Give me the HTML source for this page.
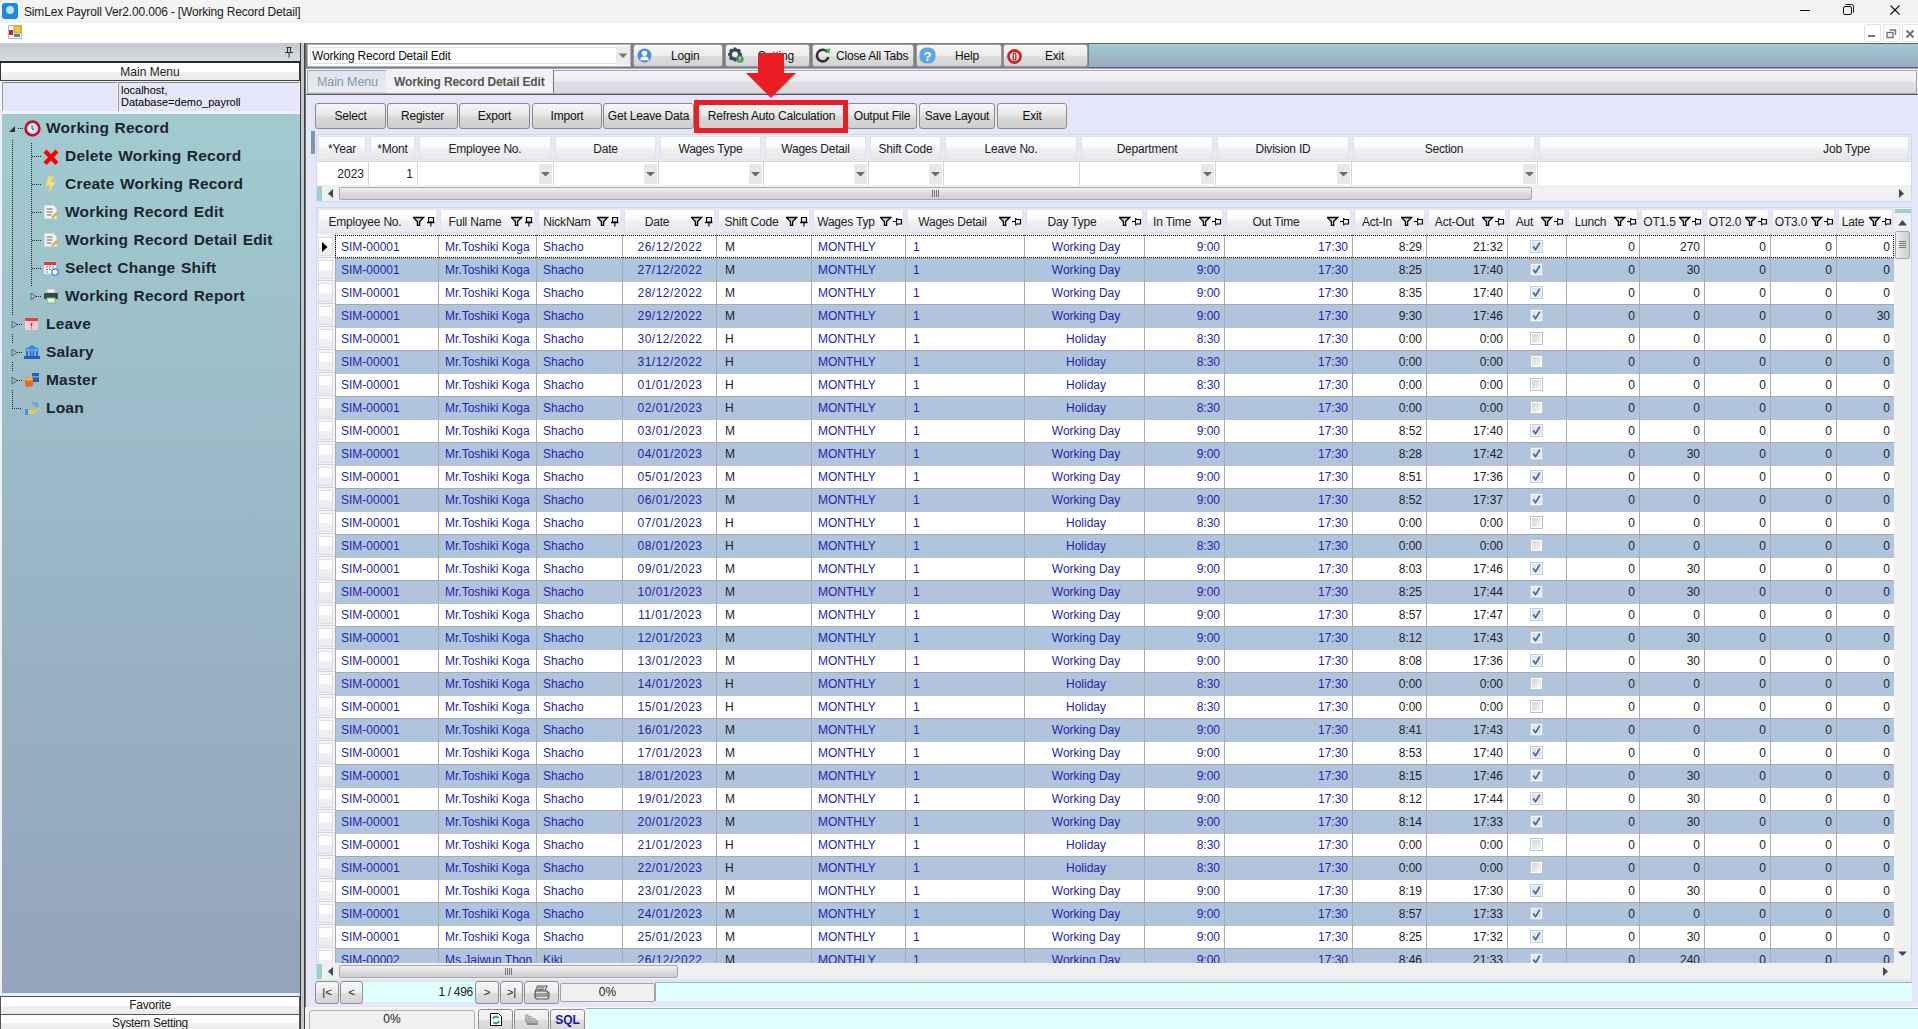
<!DOCTYPE html><html><head><meta charset="utf-8"><style>
*{box-sizing:border-box;margin:0;padding:0}
html,body{width:1918px;height:1029px;overflow:hidden;background:#f0f0f0;font-family:"Liberation Sans", sans-serif;font-size:12px;color:#000}
.ab{position:absolute}
.btn{position:absolute;border:1px solid #8a8a8a;border-radius:3px;background:linear-gradient(#f6f6f6 0%,#e8e8e8 45%,#d9d9d9 55%,#cfcfcf 100%);text-align:center;color:#111;letter-spacing:-0.2px;white-space:nowrap}
.tb{position:absolute;border:1px solid #9a9a9a;border-radius:3px;background:linear-gradient(#f7f7f7 0%,#ececec 50%,#dedede 51%,#d4d4d4 100%);color:#111;white-space:nowrap}
.hc{position:absolute;background:linear-gradient(#ffffff 0%,#fbfbfc 40%,#eeeef1 60%,#e9e9ee 100%);border:1px solid #e2e2ea;color:#333;white-space:nowrap;letter-spacing:-0.2px}
.t{position:absolute;white-space:nowrap}
</style></head><body>
<div class="ab" style="left:0;top:0;width:1918px;height:23px;background:#f3f3f3"></div>
<div class="ab" style="left:2px;top:3px;width:16px;height:16px;border-radius:3px;background:#1a8ae6"></div>
<div class="ab" style="left:6px;top:6px;width:8px;height:8px;border-radius:50%;background:#bfe3ff"></div>
<div class="t" style="left:24px;top:5px;font-size:12px;color:#1b1b1b;letter-spacing:-0.17px">SimLex Payroll Ver2.00.006 - [Working Record Detail]</div>
<svg class="ab" style="left:1790px;top:0" width="128" height="23"><path d="M10 10.5h10" stroke="#111" stroke-width="1"/><rect x="53.5" y="6.5" width="8" height="8" rx="1.5" fill="none" stroke="#111"/><path d="M55.5 4.5h6a2 2 0 0 1 2 2v6" fill="none" stroke="#111"/><path d="M100.5 5.5l9 9M109.5 5.5l-9 9" stroke="#111" stroke-width="1.1"/></svg>
<div class="ab" style="left:0;top:23px;width:1918px;height:20px;background:#fff"></div>
<svg class="ab" style="left:8px;top:25px" width="14" height="14"><rect x="0.5" y="0.5" width="13" height="13" fill="#fff" stroke="#bbb"/><rect x="6" y="1" width="7" height="7" fill="#f6c53a" stroke="#c9a020"/><rect x="1" y="5" width="4" height="5" fill="#c0282b"/><rect x="6" y="9" width="6" height="3" fill="#4a7fd0"/></svg>
<div class="ab" style="left:1864px;top:24px;width:17px;height:18px;border:1px solid #e4e4e4;border-radius:2px;background:#fff"></div>
<div class="ab" style="left:1883px;top:24px;width:17px;height:18px;border:1px solid #e4e4e4;border-radius:2px;background:#fff"></div>
<div class="ab" style="left:1902px;top:24px;width:17px;height:18px;border:1px solid #e4e4e4;border-radius:2px;background:#fff"></div>
<div class="ab" style="left:1868px;top:35px;width:7px;height:2px;background:#6a7683"></div>
<svg class="ab" style="left:1886px;top:28px" width="12" height="11"><rect x="1" y="4.5" width="6" height="5" fill="none" stroke="#6a7683" stroke-width="1.4"/><path d="M3.5 2h6v5" fill="none" stroke="#6a7683" stroke-width="1.4"/></svg>
<svg class="ab" style="left:1905px;top:29px" width="10" height="10"><path d="M1.5 1.5l7 7M8.5 1.5l-7 7" stroke="#6a7683" stroke-width="2"/></svg>
<div class="ab" style="left:0;top:43px;width:300px;height:18px;background:linear-gradient(#c3c8cf,#dadbdf)"></div>
<svg class="ab" style="left:284px;top:46px" width="10" height="12"><path d="M2.5 1.5h5M3.5 1.5v5M6.5 1.5v5M1 6.5h8M5 6.5v5" stroke="#333" stroke-width="1" fill="none"/></svg>
<div class="ab" style="left:0;top:61px;width:300px;height:2px;background:#1f2b38"></div>
<div class="ab" style="left:0;top:63px;width:300px;height:18px;background:linear-gradient(#fff 0%,#fff 55%,#efeff1 56%,#ececee 100%);border-left:1px solid #333;border-right:1px solid #333;border-bottom:1px solid #444"></div>
<div class="t" style="left:0;top:65px;width:300px;text-align:center;color:#222">Main Menu</div>
<div class="ab" style="left:0;top:82px;width:300px;height:32px;background:#f4f4f8"></div>
<div class="ab" style="left:2px;top:82px;width:115px;height:29px;background:#e6e6fa;border-left:1px solid #999;border-top:1px solid #888"></div>
<div class="ab" style="left:118px;top:82px;width:181px;height:29px;background:#e6e6fa;border-left:1px solid #999;border-top:1px solid #888"></div>
<div class="t" style="left:121px;top:84px;font-size:11px;line-height:12px;color:#000;letter-spacing:0px">localhost,<br>Database=demo_payroll</div>
<div class="ab" style="left:2px;top:114px;width:298px;height:879px;background:linear-gradient(#a1cbd0 0%,#9ab8c6 45%,#94a4bb 100%)"></div>
<div class="ab" style="left:0;top:114px;width:2px;height:879px;background:#eef0f3"></div>
<svg class="ab" style="left:9px;top:125px" width="8" height="8"><path d="M6 1v6H0z" fill="#333"/></svg>
<div class="ab" style="left:18px;top:128px;width:5px;height:1px;background:repeating-linear-gradient(90deg,#222 0 1px,transparent 1px 2px)"></div>
<div class="ab" style="left:24px;top:120px;width:16px;height:17px"><svg width="17" height="17"><circle cx="8.5" cy="8.5" r="6.8" fill="#f4f6fa" stroke="#c8102e" stroke-width="2.8"/><path d="M8.5 3.2a5.3 5.3 0 0 1 0 10.6z" fill="#c9dcf2"/><path d="M8 5v4.2h2" stroke="#3a4a6a" stroke-width="1" fill="none"/></svg></div>
<div class="t" style="left:46px;top:119px;font-size:15.5px;font-weight:bold;color:#1b2530;letter-spacing:0.2px;word-spacing:1px">Working Record</div>
<div class="ab" style="left:12px;top:140px;width:1px;height:176px;background:repeating-linear-gradient(#222 0 1px,transparent 1px 2px)"></div>
<div class="ab" style="left:12px;top:334px;width:1px;height:10px;background:repeating-linear-gradient(#222 0 1px,transparent 1px 2px)"></div>
<div class="ab" style="left:12px;top:362px;width:1px;height:10px;background:repeating-linear-gradient(#222 0 1px,transparent 1px 2px)"></div>
<div class="ab" style="left:12px;top:390px;width:1px;height:18px;background:repeating-linear-gradient(#222 0 1px,transparent 1px 2px)"></div>
<div class="ab" style="left:31px;top:143px;width:1px;height:144px;background:repeating-linear-gradient(#222 0 1px,transparent 1px 2px)"></div>
<div class="ab" style="left:32px;top:156px;width:10px;height:1px;background:repeating-linear-gradient(90deg,#222 0 1px,transparent 1px 2px)"></div>
<div class="ab" style="left:43px;top:148px;width:16px;height:17px"><svg width="16" height="17" style="margin:1px 0 0 0"><path d="M3.5 3.5l9 9.5M12.5 3.5l-9 9.5" stroke="#f00" stroke-width="4.2" stroke-linecap="square"/></svg></div>
<div class="t" style="left:65px;top:147px;font-size:15.5px;font-weight:bold;color:#1b2530;letter-spacing:0.2px;word-spacing:1px">Delete Working Record</div>
<div class="ab" style="left:32px;top:184px;width:10px;height:1px;background:repeating-linear-gradient(90deg,#222 0 1px,transparent 1px 2px)"></div>
<div class="ab" style="left:43px;top:176px;width:16px;height:17px"><svg width="14" height="18"><path d="M5 0.5h5.5l-2.5 5.5h4.5l-7.5 11.5 2-8H3z" fill="#f9dc6c"/></svg></div>
<div class="t" style="left:65px;top:175px;font-size:15.5px;font-weight:bold;color:#1b2530;letter-spacing:0.2px;word-spacing:1px">Create Working Record</div>
<div class="ab" style="left:32px;top:212px;width:10px;height:1px;background:repeating-linear-gradient(90deg,#222 0 1px,transparent 1px 2px)"></div>
<div class="ab" style="left:43px;top:204px;width:16px;height:17px"><svg width="16" height="16"><path d="M1.5 1.5h9l3 3v10h-12z" fill="#f4f4f4" stroke="#d8d8d8"/><path d="M3.5 5h6M3.5 8h6M3.5 11h5" stroke="#666" stroke-width="1"/><path d="M9 14l5-5" stroke="#e8a33a" stroke-width="2.4"/></svg></div>
<div class="t" style="left:65px;top:203px;font-size:15.5px;font-weight:bold;color:#1b2530;letter-spacing:0.2px;word-spacing:1px">Working Record Edit</div>
<div class="ab" style="left:32px;top:240px;width:10px;height:1px;background:repeating-linear-gradient(90deg,#222 0 1px,transparent 1px 2px)"></div>
<div class="ab" style="left:43px;top:232px;width:16px;height:17px"><svg width="16" height="16"><path d="M1.5 1.5h9l3 3v10h-12z" fill="#f4f4f4" stroke="#d8d8d8"/><path d="M3.5 5h6M3.5 8h6M3.5 11h5" stroke="#666" stroke-width="1"/><path d="M9 14l5-5" stroke="#e8a33a" stroke-width="2.4"/></svg></div>
<div class="t" style="left:65px;top:231px;font-size:15.5px;font-weight:bold;color:#1b2530;letter-spacing:0.2px;word-spacing:1px">Working Record Detail Edit</div>
<div class="ab" style="left:32px;top:268px;width:10px;height:1px;background:repeating-linear-gradient(90deg,#222 0 1px,transparent 1px 2px)"></div>
<div class="ab" style="left:43px;top:260px;width:16px;height:17px"><svg width="16" height="16"><rect x="1" y="2" width="12" height="12" fill="#fff" stroke="#ccc"/><rect x="1" y="2" width="12" height="3" fill="#e53935"/><path d="M3 7h2M6 7h2M9 7h2M3 9.5h2M6 9.5h2M3 12h2" stroke="#777"/><circle cx="12" cy="12" r="3.2" fill="#fff" stroke="#2a7de1" stroke-width="1.2"/></svg></div>
<div class="t" style="left:65px;top:259px;font-size:15.5px;font-weight:bold;color:#1b2530;letter-spacing:0.2px;word-spacing:1px">Select Change Shift</div>
<svg class="ab" style="left:30px;top:292px" width="7" height="9"><path d="M1 1l5 3.5L1 8z" fill="none" stroke="#666"/></svg>
<div class="ab" style="left:36px;top:296px;width:6px;height:1px;background:repeating-linear-gradient(90deg,#222 0 1px,transparent 1px 2px)"></div>
<div class="ab" style="left:43px;top:288px;width:16px;height:17px"><svg width="16" height="16"><rect x="4" y="1" width="8" height="4" fill="#eee" stroke="#bbb"/><rect x="1" y="5" width="14" height="6" rx="1" fill="#3d4450"/><rect x="4" y="10" width="8" height="5" fill="#e8f4e8" stroke="#6c6"/></svg></div>
<div class="t" style="left:65px;top:287px;font-size:15.5px;font-weight:bold;color:#1b2530;letter-spacing:0.2px;word-spacing:1px">Working Record Report</div>
<svg class="ab" style="left:11px;top:320px" width="7" height="9"><path d="M1 1l5 3.5L1 8z" fill="none" stroke="#666"/></svg>
<div class="ab" style="left:17px;top:324px;width:5px;height:1px;background:repeating-linear-gradient(90deg,#222 0 1px,transparent 1px 2px)"></div>
<div class="ab" style="left:24px;top:316px;width:16px;height:17px"><svg width="15" height="15"><rect x="1" y="2" width="13" height="12" fill="#f9c9cf"/><rect x="1" y="2" width="13" height="3" fill="#e53e3e"/><path d="M7.5 7v3.5M7.5 11.5v1" stroke="#d22" stroke-width="1.2"/></svg></div>
<div class="t" style="left:46px;top:315px;font-size:15.5px;font-weight:bold;color:#1b2530;letter-spacing:0.2px;word-spacing:1px">Leave</div>
<svg class="ab" style="left:11px;top:348px" width="7" height="9"><path d="M1 1l5 3.5L1 8z" fill="none" stroke="#666"/></svg>
<div class="ab" style="left:17px;top:352px;width:5px;height:1px;background:repeating-linear-gradient(90deg,#222 0 1px,transparent 1px 2px)"></div>
<div class="ab" style="left:24px;top:344px;width:16px;height:17px"><svg width="16" height="16"><path d="M8 1l7 4H1z" fill="#3a8ee6"/><rect x="1" y="5" width="14" height="2" fill="#5aa9f0"/><path d="M3 7v5M6.5 7v5M9.5 7v5M13 7v5" stroke="#2b6cd0" stroke-width="2"/><rect x="0" y="12" width="16" height="3" fill="#1f5cc4"/></svg></div>
<div class="t" style="left:46px;top:343px;font-size:15.5px;font-weight:bold;color:#1b2530;letter-spacing:0.2px;word-spacing:1px">Salary</div>
<svg class="ab" style="left:11px;top:376px" width="7" height="9"><path d="M1 1l5 3.5L1 8z" fill="none" stroke="#666"/></svg>
<div class="ab" style="left:17px;top:380px;width:5px;height:1px;background:repeating-linear-gradient(90deg,#222 0 1px,transparent 1px 2px)"></div>
<div class="ab" style="left:24px;top:372px;width:16px;height:17px"><svg width="16" height="16"><rect x="8" y="1" width="7" height="9" fill="#2a5fae"/><rect x="8" y="4" width="7" height="1.5" fill="#6fa0e0"/><path d="M1 7a4 1.8 0 0 1 8 0v6a4 1.8 0 0 1-8 0z" fill="#e86a20"/><ellipse cx="5" cy="7" rx="4" ry="1.8" fill="#f6b13b"/></svg></div>
<div class="t" style="left:46px;top:371px;font-size:15.5px;font-weight:bold;color:#1b2530;letter-spacing:0.2px;word-spacing:1px">Master</div>
<div class="ab" style="left:12px;top:408px;width:10px;height:1px;background:repeating-linear-gradient(90deg,#222 0 1px,transparent 1px 2px)"></div>
<div class="ab" style="left:24px;top:400px;width:16px;height:17px"><svg width="16" height="16"><path d="M1 9h3v6H1z" fill="#3a8ee6"/><path d="M4 10c3 0 5 0 6 1l5-3c1 1 0 2-1 3l-5 3H4z" fill="#f4c542"/><text x="8" y="7" font-size="7" fill="#2a7de1" font-family="Liberation Sans">%</text></svg></div>
<div class="t" style="left:46px;top:399px;font-size:15.5px;font-weight:bold;color:#1b2530;letter-spacing:0.2px;word-spacing:1px">Loan</div>
<div class="ab" style="left:0;top:993px;width:300px;height:36px;background:#e4eef2"></div>
<div class="ab" style="left:0;top:996px;width:300px;height:19px;background:linear-gradient(#fff 0%,#fff 55%,#f0f0f2 56%,#ececee 100%);border:1px solid #555"></div>
<div class="t" style="left:0;top:998px;width:300px;text-align:center;color:#222;letter-spacing:-0.2px">Favorite</div>
<div class="ab" style="left:0;top:1014px;width:300px;height:17px;background:linear-gradient(#fff 0%,#fff 55%,#f0f0f2 56%,#ececee 100%);border:1px solid #555"></div>
<div class="t" style="left:0;top:1016px;width:300px;text-align:center;color:#222;letter-spacing:-0.35px">System Setting</div>
<div class="ab" style="left:300px;top:43px;width:1px;height:986px;background:#3a3a3a"></div>
<div class="ab" style="left:301px;top:43px;width:3px;height:986px;background:#c8c8c8"></div>
<div class="ab" style="left:304px;top:43px;width:1px;height:986px;background:#404040"></div>
<div class="ab" style="left:305px;top:43px;width:1px;height:964px;background:#707070"></div>
<div class="ab" style="left:306px;top:43px;width:1612px;height:26px;background:linear-gradient(#a2ccd1,#95a8bf)"></div>
<div class="ab" style="left:306px;top:43px;width:1612px;height:1px;background:#55606a"></div>
<div class="ab" style="left:306px;top:67px;width:1612px;height:1px;background:#5c6670"></div>
<div class="ab" style="left:306px;top:43px;width:783px;height:25px;background:#7c8084"></div>
<div class="ab" style="left:307px;top:44px;width:324px;height:23px;background:#fff;border:1px solid #b0b0b0"></div>
<div class="ab" style="left:310px;top:47px;width:306px;height:17px;border:1px solid #e0e0e0;border-right:none"></div>
<div class="ab" style="left:616px;top:46px;width:14px;height:19px;background:#ececec"></div>
<svg class="ab" style="left:618px;top:53px" width="10" height="6"><path d="M0.5 0.5h9L5 5z" fill="#777"/></svg>
<div class="t" style="left:312px;top:49px;color:#111;letter-spacing:-0.2px">Working Record Detail Edit</div>
<div class="tb" style="left:633px;top:44px;width:90px;height:23px"></div>
<div class="ab" style="left:637px;top:48px"><svg width="15" height="15" style="display:block"><circle cx="7.5" cy="7.5" r="7" fill="#4a8ee0"/><circle cx="7.5" cy="5.3" r="2.6" fill="#fff"/><path d="M3.2 12.2a4.3 3.6 0 0 1 8.6 0z" fill="#fff"/></svg></div>
<div class="t" style="left:671px;top:49px;color:#111;letter-spacing:-0.2px">Login</div>
<div class="tb" style="left:725px;top:44px;width:85px;height:23px"></div>
<div class="ab" style="left:728px;top:47px"><svg width="16" height="16" style="display:block"><circle cx="7" cy="7.5" r="4.6" fill="none" stroke="#3b4a55" stroke-width="3.2"/><path d="M7 0.5v3M7 11.5v3M0 7.5h3M11 7.5h3M2 2.5l2 2M10 10.5l2 2M12 2.5l-2 2M2 12.5l2-2" stroke="#3b4a55" stroke-width="2.6"/><circle cx="12" cy="12.2" r="3.6" fill="#43a047"/><path d="M12 10v2.3M12 13.3v.9" stroke="#fff" stroke-width="1.2"/></svg></div>
<div class="t" style="left:758px;top:49px;color:#111;letter-spacing:-0.2px">Setting</div>
<div class="tb" style="left:812px;top:44px;width:102px;height:23px"></div>
<div class="ab" style="left:815px;top:48px"><svg width="16" height="15" style="display:block"><path d="M12.5 4.2A5.8 5.8 0 1 0 13.4 9" fill="none" stroke="#333" stroke-width="2.6"/><path d="M9.5 1.5l5.5-1-0.8 5.5z" fill="#2db24a"/></svg></div>
<div class="t" style="left:836px;top:49px;color:#111;letter-spacing:-0.2px">Close All Tabs</div>
<div class="tb" style="left:916px;top:44px;width:86px;height:23px"></div>
<div class="ab" style="left:919px;top:47px"><svg width="17" height="17" style="display:block"><rect x="0.5" y="0.5" width="16" height="16" rx="6.5" fill="#5aa6e8"/><text x="4.6" y="13.5" font-size="13" font-weight="bold" fill="#fff" font-family="Liberation Sans">?</text></svg></div>
<div class="t" style="left:955px;top:49px;color:#111;letter-spacing:-0.2px">Help</div>
<div class="tb" style="left:1003px;top:44px;width:85px;height:23px"></div>
<div class="ab" style="left:1007px;top:49px"><svg width="15" height="15" style="display:block"><circle cx="7.5" cy="7.5" r="6" fill="none" stroke="#c62828" stroke-width="2.8"/><rect x="6.2" y="4.2" width="2.6" height="6.4" rx="1.2" fill="none" stroke="#c62828" stroke-width="1.3"/></svg></div>
<div class="t" style="left:1045px;top:49px;color:#111;letter-spacing:-0.2px">Exit</div>
<div class="ab" style="left:306px;top:69px;width:1612px;height:26px;background:#f4f4f8"></div>
<div class="ab" style="left:307px;top:70px;width:1610px;height:24px;background:linear-gradient(#f4f4f6 0%,#ededf0 45%,#dfdfe3 52%,#dadade 100%);border:1px solid #a8a8ac"></div>
<div class="ab" style="left:308px;top:71px;width:78px;height:21px;background:linear-gradient(#dfe6ef,#e8ebf0);border-left:1px solid #e8e8ee"></div>
<div class="t" style="left:317px;top:75px;color:#8a96a6;letter-spacing:-0.1px;font-size:12.5px">Main Menu</div>
<div class="ab" style="left:386px;top:70px;width:168px;height:23px;background:#f2f2f4;border-right:1px solid #777"></div>
<div class="t" style="left:394px;top:75px;color:#555;font-weight:bold;letter-spacing:-0.15px">Working Record Detail Edit</div>
<div class="ab" style="left:306px;top:94px;width:1612px;height:1px;background:#5a5a5a"></div>
<div class="ab" style="left:306px;top:95px;width:1612px;height:934px;background:#e6e6fa"></div>
<div class="btn" style="left:315px;top:103px;width:71px;height:26px;line-height:24px">Select</div>
<div class="btn" style="left:387px;top:103px;width:71px;height:26px;line-height:24px">Register</div>
<div class="btn" style="left:459px;top:103px;width:71px;height:26px;line-height:24px">Export</div>
<div class="btn" style="left:532px;top:103px;width:70px;height:26px;line-height:24px">Import</div>
<div class="btn" style="left:603px;top:103px;width:91px;height:26px;line-height:24px">Get Leave Data</div>
<div class="btn" style="left:698px;top:103px;width:147px;height:26px;line-height:24px">Refresh Auto Calculation</div>
<div class="btn" style="left:847px;top:103px;width:70px;height:26px;line-height:24px">Output File</div>
<div class="btn" style="left:919px;top:103px;width:76px;height:26px;line-height:24px">Save Layout</div>
<div class="btn" style="left:997px;top:103px;width:70px;height:26px;line-height:24px">Exit</div>
<div class="ab" style="left:694px;top:100px;width:154px;height:33px;border:5px solid #ec1c24"></div>
<svg class="ab" style="left:745px;top:53px" width="52" height="46"><path d="M13 0h26v20h12L26 45 1 20h12z" fill="#ec1c24"/></svg>
<div class="ab" style="left:316px;top:134px;width:1596px;height:68px;background:#fff;border:1px solid #c8dde8"></div>
<div class="ab" style="left:311px;top:131px;width:4px;height:23px;background:#7d95b0"></div>
<div class="ab" style="left:317px;top:135px;width:1594px;height:26px;background:#e9e9f6"></div>
<div class="hc" style="left:318px;top:136px;width:48px;height:24px"></div>
<div class="t" style="left:316px;top:142px;width:52px;text-align:center;color:#222;letter-spacing:-0.2px">*Year</div>
<div class="hc" style="left:370px;top:136px;width:45px;height:24px"></div>
<div class="t" style="left:368px;top:142px;width:49px;text-align:center;color:#222;letter-spacing:-0.2px">*Mont</div>
<div class="ab" style="left:368px;top:161px;width:1px;height:24px;background:#d4d4d4"></div>
<div class="hc" style="left:419px;top:136px;width:132px;height:24px"></div>
<div class="t" style="left:417px;top:142px;width:136px;text-align:center;color:#222;letter-spacing:-0.2px">Employee No.</div>
<div class="ab" style="left:417px;top:161px;width:1px;height:24px;background:#d4d4d4"></div>
<div class="ab" style="left:539px;top:164px;width:13px;height:20px;background:#e8e8e8"></div>
<svg class="ab" style="left:541px;top:172px" width="9" height="5"><path d="M0 0h9L4.5 4.5z" fill="#6b6b6b"/></svg>
<div class="hc" style="left:555px;top:136px;width:101px;height:24px"></div>
<div class="t" style="left:553px;top:142px;width:105px;text-align:center;color:#222;letter-spacing:-0.2px">Date</div>
<div class="ab" style="left:553px;top:161px;width:1px;height:24px;background:#d4d4d4"></div>
<div class="ab" style="left:644px;top:164px;width:13px;height:20px;background:#e8e8e8"></div>
<svg class="ab" style="left:646px;top:172px" width="9" height="5"><path d="M0 0h9L4.5 4.5z" fill="#6b6b6b"/></svg>
<div class="hc" style="left:660px;top:136px;width:101px;height:24px"></div>
<div class="t" style="left:658px;top:142px;width:105px;text-align:center;color:#222;letter-spacing:-0.2px">Wages Type</div>
<div class="ab" style="left:658px;top:161px;width:1px;height:24px;background:#d4d4d4"></div>
<div class="ab" style="left:749px;top:164px;width:13px;height:20px;background:#e8e8e8"></div>
<svg class="ab" style="left:751px;top:172px" width="9" height="5"><path d="M0 0h9L4.5 4.5z" fill="#6b6b6b"/></svg>
<div class="hc" style="left:765px;top:136px;width:101px;height:24px"></div>
<div class="t" style="left:763px;top:142px;width:105px;text-align:center;color:#222;letter-spacing:-0.2px">Wages Detail</div>
<div class="ab" style="left:763px;top:161px;width:1px;height:24px;background:#d4d4d4"></div>
<div class="ab" style="left:854px;top:164px;width:13px;height:20px;background:#e8e8e8"></div>
<svg class="ab" style="left:856px;top:172px" width="9" height="5"><path d="M0 0h9L4.5 4.5z" fill="#6b6b6b"/></svg>
<div class="hc" style="left:870px;top:136px;width:71px;height:24px"></div>
<div class="t" style="left:868px;top:142px;width:75px;text-align:center;color:#222;letter-spacing:-0.2px">Shift Code</div>
<div class="ab" style="left:868px;top:161px;width:1px;height:24px;background:#d4d4d4"></div>
<div class="ab" style="left:929px;top:164px;width:13px;height:20px;background:#e8e8e8"></div>
<svg class="ab" style="left:931px;top:172px" width="9" height="5"><path d="M0 0h9L4.5 4.5z" fill="#6b6b6b"/></svg>
<div class="hc" style="left:945px;top:136px;width:132px;height:24px"></div>
<div class="t" style="left:943px;top:142px;width:136px;text-align:center;color:#222;letter-spacing:-0.2px">Leave No.</div>
<div class="ab" style="left:943px;top:161px;width:1px;height:24px;background:#d4d4d4"></div>
<div class="hc" style="left:1081px;top:136px;width:132px;height:24px"></div>
<div class="t" style="left:1079px;top:142px;width:136px;text-align:center;color:#222;letter-spacing:-0.2px">Department</div>
<div class="ab" style="left:1079px;top:161px;width:1px;height:24px;background:#d4d4d4"></div>
<div class="ab" style="left:1201px;top:164px;width:13px;height:20px;background:#e8e8e8"></div>
<svg class="ab" style="left:1203px;top:172px" width="9" height="5"><path d="M0 0h9L4.5 4.5z" fill="#6b6b6b"/></svg>
<div class="hc" style="left:1217px;top:136px;width:132px;height:24px"></div>
<div class="t" style="left:1215px;top:142px;width:136px;text-align:center;color:#222;letter-spacing:-0.2px">Division ID</div>
<div class="ab" style="left:1215px;top:161px;width:1px;height:24px;background:#d4d4d4"></div>
<div class="ab" style="left:1337px;top:164px;width:13px;height:20px;background:#e8e8e8"></div>
<svg class="ab" style="left:1339px;top:172px" width="9" height="5"><path d="M0 0h9L4.5 4.5z" fill="#6b6b6b"/></svg>
<div class="hc" style="left:1353px;top:136px;width:182px;height:24px"></div>
<div class="t" style="left:1351px;top:142px;width:186px;text-align:center;color:#222;letter-spacing:-0.2px">Section</div>
<div class="ab" style="left:1351px;top:161px;width:1px;height:24px;background:#d4d4d4"></div>
<div class="ab" style="left:1523px;top:164px;width:13px;height:20px;background:#e8e8e8"></div>
<svg class="ab" style="left:1525px;top:172px" width="9" height="5"><path d="M0 0h9L4.5 4.5z" fill="#6b6b6b"/></svg>
<div class="hc" style="left:1539px;top:136px;width:370px;height:24px"></div>
<div class="t" style="left:1537px;top:142px;width:333px;text-align:right;color:#222;letter-spacing:-0.2px">Job Type</div>
<div class="ab" style="left:1537px;top:161px;width:1px;height:24px;background:#d4d4d4"></div>
<div class="ab" style="left:317px;top:161px;width:1594px;height:1px;background:#d8d8e8"></div>
<div class="t" style="left:316px;top:167px;width:48px;text-align:right;color:#222">2023</div>
<div class="t" style="left:368px;top:167px;width:45px;text-align:right;color:#222">1</div>
<div class="ab" style="left:317px;top:185px;width:1594px;height:16px;background:#f0f0f0"></div>
<div class="ab" style="left:317px;top:186px;width:5px;height:15px;background:#9fcfd0"></div>
<svg class="ab" style="left:328px;top:189px" width="6" height="9"><path d="M5 0v9L0 4.5z" fill="#3e4862"/></svg>
<div class="ab" style="left:339px;top:187px;width:1193px;height:13px;border:1px solid #a8a8a8;border-radius:2px;background:linear-gradient(#f2f2f2,#dcdcdc 50%,#cfcfcf)"></div>
<svg class="ab" style="left:932px;top:190px" width="8" height="7"><path d="M0.5 0v7M2.5 0v7M4.5 0v7M6.5 0v7" stroke="#777"/></svg>
<svg class="ab" style="left:1899px;top:189px" width="6" height="9"><path d="M0 0v9L5 4.5z" fill="#3e4862"/></svg>
<div class="ab" style="left:316px;top:207px;width:1596px;height:773px;background:#f0f0f0;border:1px solid #c8dde8"></div>
<div class="ab" style="left:317px;top:208px;width:1577px;height:26px;background:#e6e6f6"></div>
<div class="hc" style="left:318px;top:209px;width:119px;height:24px"></div>
<div class="t" style="left:316px;top:215px;width:98px;text-align:center;color:#222;letter-spacing:-0.2px">Employee No.</div>
<div class="ab" style="left:413px;top:216px;width:24px;height:12px"><svg width="24" height="12"><path d="M0.3 1.5H10.7L6.6 5.6V9.3H4.4V5.6Z" fill="#d0d0d0" stroke="#000" stroke-width="1.3" stroke-linejoin="miter"/><path d="M15.5 1.5h5v4.5h-5z" fill="#e8e8e8" stroke="#000" stroke-width="1.2"/><path d="M14 6.6h7.5" stroke="#000" stroke-width="1.3"/><path d="M17.9 7v3.5" stroke="#000" stroke-width="1.1"/></svg></div>
<div class="hc" style="left:440px;top:209px;width:95px;height:24px"></div>
<div class="t" style="left:438px;top:215px;width:74px;text-align:center;color:#222;letter-spacing:-0.2px">Full Name</div>
<div class="ab" style="left:511px;top:216px;width:24px;height:12px"><svg width="24" height="12"><path d="M0.3 1.5H10.7L6.6 5.6V9.3H4.4V5.6Z" fill="#d0d0d0" stroke="#000" stroke-width="1.3" stroke-linejoin="miter"/><path d="M15.5 1.5h5v4.5h-5z" fill="#e8e8e8" stroke="#000" stroke-width="1.2"/><path d="M14 6.6h7.5" stroke="#000" stroke-width="1.3"/><path d="M17.9 7v3.5" stroke="#000" stroke-width="1.1"/></svg></div>
<div class="hc" style="left:538px;top:209px;width:83px;height:24px"></div>
<div class="t" style="left:536px;top:215px;width:62px;text-align:center;color:#222;letter-spacing:-0.2px">NickNam</div>
<div class="ab" style="left:597px;top:216px;width:24px;height:12px"><svg width="24" height="12"><path d="M0.3 1.5H10.7L6.6 5.6V9.3H4.4V5.6Z" fill="#d0d0d0" stroke="#000" stroke-width="1.3" stroke-linejoin="miter"/><path d="M15.5 1.5h5v4.5h-5z" fill="#e8e8e8" stroke="#000" stroke-width="1.2"/><path d="M14 6.6h7.5" stroke="#000" stroke-width="1.3"/><path d="M17.9 7v3.5" stroke="#000" stroke-width="1.1"/></svg></div>
<div class="hc" style="left:624px;top:209px;width:91px;height:24px"></div>
<div class="t" style="left:622px;top:215px;width:70px;text-align:center;color:#222;letter-spacing:-0.2px">Date</div>
<div class="ab" style="left:691px;top:216px;width:24px;height:12px"><svg width="24" height="12"><path d="M0.3 1.5H10.7L6.6 5.6V9.3H4.4V5.6Z" fill="#d0d0d0" stroke="#000" stroke-width="1.3" stroke-linejoin="miter"/><path d="M15.5 1.5h5v4.5h-5z" fill="#e8e8e8" stroke="#000" stroke-width="1.2"/><path d="M14 6.6h7.5" stroke="#000" stroke-width="1.3"/><path d="M17.9 7v3.5" stroke="#000" stroke-width="1.1"/></svg></div>
<div class="hc" style="left:718px;top:209px;width:92px;height:24px"></div>
<div class="t" style="left:716px;top:215px;width:71px;text-align:center;color:#222;letter-spacing:-0.2px">Shift Code</div>
<div class="ab" style="left:786px;top:216px;width:24px;height:12px"><svg width="24" height="12"><path d="M0.3 1.5H10.7L6.6 5.6V9.3H4.4V5.6Z" fill="#d0d0d0" stroke="#000" stroke-width="1.3" stroke-linejoin="miter"/><path d="M15.5 1.5h5v4.5h-5z" fill="#e8e8e8" stroke="#000" stroke-width="1.2"/><path d="M14 6.6h7.5" stroke="#000" stroke-width="1.3"/><path d="M17.9 7v3.5" stroke="#000" stroke-width="1.1"/></svg></div>
<div class="hc" style="left:813px;top:209px;width:91px;height:24px"></div>
<div class="t" style="left:811px;top:215px;width:70px;text-align:center;color:#222;letter-spacing:-0.2px">Wages Typ</div>
<div class="ab" style="left:880px;top:216px;width:24px;height:12px"><svg width="24" height="12"><path d="M0.3 1.5H10.7L6.6 5.6V9.3H4.4V5.6Z" fill="#d0d0d0" stroke="#000" stroke-width="1.3" stroke-linejoin="miter"/><path d="M13 5.5h3.5" stroke="#000" stroke-width="1.1"/><path d="M16.8 2v7.5" stroke="#000" stroke-width="1.3"/><path d="M17 3.5h4.5v4.5H17" fill="#f0f0f0" stroke="#000" stroke-width="1.2"/></svg></div>
<div class="hc" style="left:907px;top:209px;width:116px;height:24px"></div>
<div class="t" style="left:905px;top:215px;width:95px;text-align:center;color:#222;letter-spacing:-0.2px">Wages Detail</div>
<div class="ab" style="left:999px;top:216px;width:24px;height:12px"><svg width="24" height="12"><path d="M0.3 1.5H10.7L6.6 5.6V9.3H4.4V5.6Z" fill="#d0d0d0" stroke="#000" stroke-width="1.3" stroke-linejoin="miter"/><path d="M13 5.5h3.5" stroke="#000" stroke-width="1.1"/><path d="M16.8 2v7.5" stroke="#000" stroke-width="1.3"/><path d="M17 3.5h4.5v4.5H17" fill="#f0f0f0" stroke="#000" stroke-width="1.2"/></svg></div>
<div class="hc" style="left:1026px;top:209px;width:117px;height:24px"></div>
<div class="t" style="left:1024px;top:215px;width:96px;text-align:center;color:#222;letter-spacing:-0.2px">Day Type</div>
<div class="ab" style="left:1119px;top:216px;width:24px;height:12px"><svg width="24" height="12"><path d="M0.3 1.5H10.7L6.6 5.6V9.3H4.4V5.6Z" fill="#d0d0d0" stroke="#000" stroke-width="1.3" stroke-linejoin="miter"/><path d="M13 5.5h3.5" stroke="#000" stroke-width="1.1"/><path d="M16.8 2v7.5" stroke="#000" stroke-width="1.3"/><path d="M17 3.5h4.5v4.5H17" fill="#f0f0f0" stroke="#000" stroke-width="1.2"/></svg></div>
<div class="hc" style="left:1146px;top:209px;width:77px;height:24px"></div>
<div class="t" style="left:1144px;top:215px;width:56px;text-align:center;color:#222;letter-spacing:-0.2px">In Time</div>
<div class="ab" style="left:1199px;top:216px;width:24px;height:12px"><svg width="24" height="12"><path d="M0.3 1.5H10.7L6.6 5.6V9.3H4.4V5.6Z" fill="#d0d0d0" stroke="#000" stroke-width="1.3" stroke-linejoin="miter"/><path d="M13 5.5h3.5" stroke="#000" stroke-width="1.1"/><path d="M16.8 2v7.5" stroke="#000" stroke-width="1.3"/><path d="M17 3.5h4.5v4.5H17" fill="#f0f0f0" stroke="#000" stroke-width="1.2"/></svg></div>
<div class="hc" style="left:1226px;top:209px;width:125px;height:24px"></div>
<div class="t" style="left:1224px;top:215px;width:104px;text-align:center;color:#222;letter-spacing:-0.2px">Out Time</div>
<div class="ab" style="left:1327px;top:216px;width:24px;height:12px"><svg width="24" height="12"><path d="M0.3 1.5H10.7L6.6 5.6V9.3H4.4V5.6Z" fill="#d0d0d0" stroke="#000" stroke-width="1.3" stroke-linejoin="miter"/><path d="M13 5.5h3.5" stroke="#000" stroke-width="1.1"/><path d="M16.8 2v7.5" stroke="#000" stroke-width="1.3"/><path d="M17 3.5h4.5v4.5H17" fill="#f0f0f0" stroke="#000" stroke-width="1.2"/></svg></div>
<div class="hc" style="left:1354px;top:209px;width:71px;height:24px"></div>
<div class="t" style="left:1352px;top:215px;width:50px;text-align:center;color:#222;letter-spacing:-0.2px">Act-In</div>
<div class="ab" style="left:1401px;top:216px;width:24px;height:12px"><svg width="24" height="12"><path d="M0.3 1.5H10.7L6.6 5.6V9.3H4.4V5.6Z" fill="#d0d0d0" stroke="#000" stroke-width="1.3" stroke-linejoin="miter"/><path d="M13 5.5h3.5" stroke="#000" stroke-width="1.1"/><path d="M16.8 2v7.5" stroke="#000" stroke-width="1.3"/><path d="M17 3.5h4.5v4.5H17" fill="#f0f0f0" stroke="#000" stroke-width="1.2"/></svg></div>
<div class="hc" style="left:1428px;top:209px;width:78px;height:24px"></div>
<div class="t" style="left:1426px;top:215px;width:57px;text-align:center;color:#222;letter-spacing:-0.2px">Act-Out</div>
<div class="ab" style="left:1482px;top:216px;width:24px;height:12px"><svg width="24" height="12"><path d="M0.3 1.5H10.7L6.6 5.6V9.3H4.4V5.6Z" fill="#d0d0d0" stroke="#000" stroke-width="1.3" stroke-linejoin="miter"/><path d="M13 5.5h3.5" stroke="#000" stroke-width="1.1"/><path d="M16.8 2v7.5" stroke="#000" stroke-width="1.3"/><path d="M17 3.5h4.5v4.5H17" fill="#f0f0f0" stroke="#000" stroke-width="1.2"/></svg></div>
<div class="hc" style="left:1509px;top:209px;width:56px;height:24px"></div>
<div class="t" style="left:1507px;top:215px;width:35px;text-align:center;color:#222;letter-spacing:-0.2px">Aut</div>
<div class="ab" style="left:1541px;top:216px;width:24px;height:12px"><svg width="24" height="12"><path d="M0.3 1.5H10.7L6.6 5.6V9.3H4.4V5.6Z" fill="#d0d0d0" stroke="#000" stroke-width="1.3" stroke-linejoin="miter"/><path d="M13 5.5h3.5" stroke="#000" stroke-width="1.1"/><path d="M16.8 2v7.5" stroke="#000" stroke-width="1.3"/><path d="M17 3.5h4.5v4.5H17" fill="#f0f0f0" stroke="#000" stroke-width="1.2"/></svg></div>
<div class="hc" style="left:1568px;top:209px;width:70px;height:24px"></div>
<div class="t" style="left:1566px;top:215px;width:49px;text-align:center;color:#222;letter-spacing:-0.2px">Lunch</div>
<div class="ab" style="left:1614px;top:216px;width:24px;height:12px"><svg width="24" height="12"><path d="M0.3 1.5H10.7L6.6 5.6V9.3H4.4V5.6Z" fill="#d0d0d0" stroke="#000" stroke-width="1.3" stroke-linejoin="miter"/><path d="M13 5.5h3.5" stroke="#000" stroke-width="1.1"/><path d="M16.8 2v7.5" stroke="#000" stroke-width="1.3"/><path d="M17 3.5h4.5v4.5H17" fill="#f0f0f0" stroke="#000" stroke-width="1.2"/></svg></div>
<div class="hc" style="left:1641px;top:209px;width:62px;height:24px"></div>
<div class="t" style="left:1639px;top:215px;width:41px;text-align:center;color:#222;letter-spacing:-0.2px">OT1.5</div>
<div class="ab" style="left:1679px;top:216px;width:24px;height:12px"><svg width="24" height="12"><path d="M0.3 1.5H10.7L6.6 5.6V9.3H4.4V5.6Z" fill="#d0d0d0" stroke="#000" stroke-width="1.3" stroke-linejoin="miter"/><path d="M13 5.5h3.5" stroke="#000" stroke-width="1.1"/><path d="M16.8 2v7.5" stroke="#000" stroke-width="1.3"/><path d="M17 3.5h4.5v4.5H17" fill="#f0f0f0" stroke="#000" stroke-width="1.2"/></svg></div>
<div class="hc" style="left:1706px;top:209px;width:63px;height:24px"></div>
<div class="t" style="left:1704px;top:215px;width:42px;text-align:center;color:#222;letter-spacing:-0.2px">OT2.0</div>
<div class="ab" style="left:1745px;top:216px;width:24px;height:12px"><svg width="24" height="12"><path d="M0.3 1.5H10.7L6.6 5.6V9.3H4.4V5.6Z" fill="#d0d0d0" stroke="#000" stroke-width="1.3" stroke-linejoin="miter"/><path d="M13 5.5h3.5" stroke="#000" stroke-width="1.1"/><path d="M16.8 2v7.5" stroke="#000" stroke-width="1.3"/><path d="M17 3.5h4.5v4.5H17" fill="#f0f0f0" stroke="#000" stroke-width="1.2"/></svg></div>
<div class="hc" style="left:1772px;top:209px;width:63px;height:24px"></div>
<div class="t" style="left:1770px;top:215px;width:42px;text-align:center;color:#222;letter-spacing:-0.2px">OT3.0</div>
<div class="ab" style="left:1811px;top:216px;width:24px;height:12px"><svg width="24" height="12"><path d="M0.3 1.5H10.7L6.6 5.6V9.3H4.4V5.6Z" fill="#d0d0d0" stroke="#000" stroke-width="1.3" stroke-linejoin="miter"/><path d="M13 5.5h3.5" stroke="#000" stroke-width="1.1"/><path d="M16.8 2v7.5" stroke="#000" stroke-width="1.3"/><path d="M17 3.5h4.5v4.5H17" fill="#f0f0f0" stroke="#000" stroke-width="1.2"/></svg></div>
<div class="hc" style="left:1838px;top:209px;width:55px;height:24px"></div>
<div class="t" style="left:1836px;top:215px;width:34px;text-align:center;color:#222;letter-spacing:-0.2px">Late</div>
<div class="ab" style="left:1869px;top:216px;width:24px;height:12px"><svg width="24" height="12"><path d="M0.3 1.5H10.7L6.6 5.6V9.3H4.4V5.6Z" fill="#d0d0d0" stroke="#000" stroke-width="1.3" stroke-linejoin="miter"/><path d="M13 5.5h3.5" stroke="#000" stroke-width="1.1"/><path d="M16.8 2v7.5" stroke="#000" stroke-width="1.3"/><path d="M17 3.5h4.5v4.5H17" fill="#f0f0f0" stroke="#000" stroke-width="1.2"/></svg></div>
<div class="ab" style="left:317px;top:234px;width:1577px;height:729px;overflow:hidden">
<div class="ab" style="left:18px;top:1px;width:1559px;height:23px;background:#ffffff"></div>
<div class="ab" style="left:-1px;top:1px;width:19px;height:23px;background:#f2f2f8"></div>
<div class="ab" style="left:-1px;top:23px;width:19px;height:1px;background:#d4d4dc"></div>
<div class="ab" style="left:1px;top:3px;width:15px;height:19px;background:linear-gradient(#fff 0%,#fdfdfd 50%,#f1f1f3 51%,#ececef 100%);border:1px solid #dcdce4"></div>
<div class="ab" style="left:18px;top:24px;width:1559px;height:23px;background:#b0c4de"></div>
<div class="ab" style="left:-1px;top:24px;width:19px;height:23px;background:#f2f2f8"></div>
<div class="ab" style="left:-1px;top:46px;width:19px;height:1px;background:#d4d4dc"></div>
<div class="ab" style="left:1px;top:26px;width:15px;height:19px;background:linear-gradient(#fff 0%,#fdfdfd 50%,#f1f1f3 51%,#ececef 100%);border:1px solid #dcdce4"></div>
<div class="ab" style="left:18px;top:47px;width:1559px;height:23px;background:#ffffff"></div>
<div class="ab" style="left:-1px;top:47px;width:19px;height:23px;background:#f2f2f8"></div>
<div class="ab" style="left:-1px;top:69px;width:19px;height:1px;background:#d4d4dc"></div>
<div class="ab" style="left:1px;top:49px;width:15px;height:19px;background:linear-gradient(#fff 0%,#fdfdfd 50%,#f1f1f3 51%,#ececef 100%);border:1px solid #dcdce4"></div>
<div class="ab" style="left:18px;top:70px;width:1559px;height:23px;background:#b0c4de"></div>
<div class="ab" style="left:-1px;top:70px;width:19px;height:23px;background:#f2f2f8"></div>
<div class="ab" style="left:-1px;top:92px;width:19px;height:1px;background:#d4d4dc"></div>
<div class="ab" style="left:1px;top:72px;width:15px;height:19px;background:linear-gradient(#fff 0%,#fdfdfd 50%,#f1f1f3 51%,#ececef 100%);border:1px solid #dcdce4"></div>
<div class="ab" style="left:18px;top:93px;width:1559px;height:23px;background:#ffffff"></div>
<div class="ab" style="left:-1px;top:93px;width:19px;height:23px;background:#f2f2f8"></div>
<div class="ab" style="left:-1px;top:115px;width:19px;height:1px;background:#d4d4dc"></div>
<div class="ab" style="left:1px;top:95px;width:15px;height:19px;background:linear-gradient(#fff 0%,#fdfdfd 50%,#f1f1f3 51%,#ececef 100%);border:1px solid #dcdce4"></div>
<div class="ab" style="left:18px;top:116px;width:1559px;height:23px;background:#b0c4de"></div>
<div class="ab" style="left:-1px;top:116px;width:19px;height:23px;background:#f2f2f8"></div>
<div class="ab" style="left:-1px;top:138px;width:19px;height:1px;background:#d4d4dc"></div>
<div class="ab" style="left:1px;top:118px;width:15px;height:19px;background:linear-gradient(#fff 0%,#fdfdfd 50%,#f1f1f3 51%,#ececef 100%);border:1px solid #dcdce4"></div>
<div class="ab" style="left:18px;top:139px;width:1559px;height:23px;background:#ffffff"></div>
<div class="ab" style="left:-1px;top:139px;width:19px;height:23px;background:#f2f2f8"></div>
<div class="ab" style="left:-1px;top:161px;width:19px;height:1px;background:#d4d4dc"></div>
<div class="ab" style="left:1px;top:141px;width:15px;height:19px;background:linear-gradient(#fff 0%,#fdfdfd 50%,#f1f1f3 51%,#ececef 100%);border:1px solid #dcdce4"></div>
<div class="ab" style="left:18px;top:162px;width:1559px;height:23px;background:#b0c4de"></div>
<div class="ab" style="left:-1px;top:162px;width:19px;height:23px;background:#f2f2f8"></div>
<div class="ab" style="left:-1px;top:184px;width:19px;height:1px;background:#d4d4dc"></div>
<div class="ab" style="left:1px;top:164px;width:15px;height:19px;background:linear-gradient(#fff 0%,#fdfdfd 50%,#f1f1f3 51%,#ececef 100%);border:1px solid #dcdce4"></div>
<div class="ab" style="left:18px;top:185px;width:1559px;height:23px;background:#ffffff"></div>
<div class="ab" style="left:-1px;top:185px;width:19px;height:23px;background:#f2f2f8"></div>
<div class="ab" style="left:-1px;top:207px;width:19px;height:1px;background:#d4d4dc"></div>
<div class="ab" style="left:1px;top:187px;width:15px;height:19px;background:linear-gradient(#fff 0%,#fdfdfd 50%,#f1f1f3 51%,#ececef 100%);border:1px solid #dcdce4"></div>
<div class="ab" style="left:18px;top:208px;width:1559px;height:23px;background:#b0c4de"></div>
<div class="ab" style="left:-1px;top:208px;width:19px;height:23px;background:#f2f2f8"></div>
<div class="ab" style="left:-1px;top:230px;width:19px;height:1px;background:#d4d4dc"></div>
<div class="ab" style="left:1px;top:210px;width:15px;height:19px;background:linear-gradient(#fff 0%,#fdfdfd 50%,#f1f1f3 51%,#ececef 100%);border:1px solid #dcdce4"></div>
<div class="ab" style="left:18px;top:231px;width:1559px;height:23px;background:#ffffff"></div>
<div class="ab" style="left:-1px;top:231px;width:19px;height:23px;background:#f2f2f8"></div>
<div class="ab" style="left:-1px;top:253px;width:19px;height:1px;background:#d4d4dc"></div>
<div class="ab" style="left:1px;top:233px;width:15px;height:19px;background:linear-gradient(#fff 0%,#fdfdfd 50%,#f1f1f3 51%,#ececef 100%);border:1px solid #dcdce4"></div>
<div class="ab" style="left:18px;top:254px;width:1559px;height:23px;background:#b0c4de"></div>
<div class="ab" style="left:-1px;top:254px;width:19px;height:23px;background:#f2f2f8"></div>
<div class="ab" style="left:-1px;top:276px;width:19px;height:1px;background:#d4d4dc"></div>
<div class="ab" style="left:1px;top:256px;width:15px;height:19px;background:linear-gradient(#fff 0%,#fdfdfd 50%,#f1f1f3 51%,#ececef 100%);border:1px solid #dcdce4"></div>
<div class="ab" style="left:18px;top:277px;width:1559px;height:23px;background:#ffffff"></div>
<div class="ab" style="left:-1px;top:277px;width:19px;height:23px;background:#f2f2f8"></div>
<div class="ab" style="left:-1px;top:299px;width:19px;height:1px;background:#d4d4dc"></div>
<div class="ab" style="left:1px;top:279px;width:15px;height:19px;background:linear-gradient(#fff 0%,#fdfdfd 50%,#f1f1f3 51%,#ececef 100%);border:1px solid #dcdce4"></div>
<div class="ab" style="left:18px;top:300px;width:1559px;height:23px;background:#b0c4de"></div>
<div class="ab" style="left:-1px;top:300px;width:19px;height:23px;background:#f2f2f8"></div>
<div class="ab" style="left:-1px;top:322px;width:19px;height:1px;background:#d4d4dc"></div>
<div class="ab" style="left:1px;top:302px;width:15px;height:19px;background:linear-gradient(#fff 0%,#fdfdfd 50%,#f1f1f3 51%,#ececef 100%);border:1px solid #dcdce4"></div>
<div class="ab" style="left:18px;top:323px;width:1559px;height:23px;background:#ffffff"></div>
<div class="ab" style="left:-1px;top:323px;width:19px;height:23px;background:#f2f2f8"></div>
<div class="ab" style="left:-1px;top:345px;width:19px;height:1px;background:#d4d4dc"></div>
<div class="ab" style="left:1px;top:325px;width:15px;height:19px;background:linear-gradient(#fff 0%,#fdfdfd 50%,#f1f1f3 51%,#ececef 100%);border:1px solid #dcdce4"></div>
<div class="ab" style="left:18px;top:346px;width:1559px;height:23px;background:#b0c4de"></div>
<div class="ab" style="left:-1px;top:346px;width:19px;height:23px;background:#f2f2f8"></div>
<div class="ab" style="left:-1px;top:368px;width:19px;height:1px;background:#d4d4dc"></div>
<div class="ab" style="left:1px;top:348px;width:15px;height:19px;background:linear-gradient(#fff 0%,#fdfdfd 50%,#f1f1f3 51%,#ececef 100%);border:1px solid #dcdce4"></div>
<div class="ab" style="left:18px;top:369px;width:1559px;height:23px;background:#ffffff"></div>
<div class="ab" style="left:-1px;top:369px;width:19px;height:23px;background:#f2f2f8"></div>
<div class="ab" style="left:-1px;top:391px;width:19px;height:1px;background:#d4d4dc"></div>
<div class="ab" style="left:1px;top:371px;width:15px;height:19px;background:linear-gradient(#fff 0%,#fdfdfd 50%,#f1f1f3 51%,#ececef 100%);border:1px solid #dcdce4"></div>
<div class="ab" style="left:18px;top:392px;width:1559px;height:23px;background:#b0c4de"></div>
<div class="ab" style="left:-1px;top:392px;width:19px;height:23px;background:#f2f2f8"></div>
<div class="ab" style="left:-1px;top:414px;width:19px;height:1px;background:#d4d4dc"></div>
<div class="ab" style="left:1px;top:394px;width:15px;height:19px;background:linear-gradient(#fff 0%,#fdfdfd 50%,#f1f1f3 51%,#ececef 100%);border:1px solid #dcdce4"></div>
<div class="ab" style="left:18px;top:415px;width:1559px;height:23px;background:#ffffff"></div>
<div class="ab" style="left:-1px;top:415px;width:19px;height:23px;background:#f2f2f8"></div>
<div class="ab" style="left:-1px;top:437px;width:19px;height:1px;background:#d4d4dc"></div>
<div class="ab" style="left:1px;top:417px;width:15px;height:19px;background:linear-gradient(#fff 0%,#fdfdfd 50%,#f1f1f3 51%,#ececef 100%);border:1px solid #dcdce4"></div>
<div class="ab" style="left:18px;top:438px;width:1559px;height:23px;background:#b0c4de"></div>
<div class="ab" style="left:-1px;top:438px;width:19px;height:23px;background:#f2f2f8"></div>
<div class="ab" style="left:-1px;top:460px;width:19px;height:1px;background:#d4d4dc"></div>
<div class="ab" style="left:1px;top:440px;width:15px;height:19px;background:linear-gradient(#fff 0%,#fdfdfd 50%,#f1f1f3 51%,#ececef 100%);border:1px solid #dcdce4"></div>
<div class="ab" style="left:18px;top:461px;width:1559px;height:23px;background:#ffffff"></div>
<div class="ab" style="left:-1px;top:461px;width:19px;height:23px;background:#f2f2f8"></div>
<div class="ab" style="left:-1px;top:483px;width:19px;height:1px;background:#d4d4dc"></div>
<div class="ab" style="left:1px;top:463px;width:15px;height:19px;background:linear-gradient(#fff 0%,#fdfdfd 50%,#f1f1f3 51%,#ececef 100%);border:1px solid #dcdce4"></div>
<div class="ab" style="left:18px;top:484px;width:1559px;height:23px;background:#b0c4de"></div>
<div class="ab" style="left:-1px;top:484px;width:19px;height:23px;background:#f2f2f8"></div>
<div class="ab" style="left:-1px;top:506px;width:19px;height:1px;background:#d4d4dc"></div>
<div class="ab" style="left:1px;top:486px;width:15px;height:19px;background:linear-gradient(#fff 0%,#fdfdfd 50%,#f1f1f3 51%,#ececef 100%);border:1px solid #dcdce4"></div>
<div class="ab" style="left:18px;top:507px;width:1559px;height:23px;background:#ffffff"></div>
<div class="ab" style="left:-1px;top:507px;width:19px;height:23px;background:#f2f2f8"></div>
<div class="ab" style="left:-1px;top:529px;width:19px;height:1px;background:#d4d4dc"></div>
<div class="ab" style="left:1px;top:509px;width:15px;height:19px;background:linear-gradient(#fff 0%,#fdfdfd 50%,#f1f1f3 51%,#ececef 100%);border:1px solid #dcdce4"></div>
<div class="ab" style="left:18px;top:530px;width:1559px;height:23px;background:#b0c4de"></div>
<div class="ab" style="left:-1px;top:530px;width:19px;height:23px;background:#f2f2f8"></div>
<div class="ab" style="left:-1px;top:552px;width:19px;height:1px;background:#d4d4dc"></div>
<div class="ab" style="left:1px;top:532px;width:15px;height:19px;background:linear-gradient(#fff 0%,#fdfdfd 50%,#f1f1f3 51%,#ececef 100%);border:1px solid #dcdce4"></div>
<div class="ab" style="left:18px;top:553px;width:1559px;height:23px;background:#ffffff"></div>
<div class="ab" style="left:-1px;top:553px;width:19px;height:23px;background:#f2f2f8"></div>
<div class="ab" style="left:-1px;top:575px;width:19px;height:1px;background:#d4d4dc"></div>
<div class="ab" style="left:1px;top:555px;width:15px;height:19px;background:linear-gradient(#fff 0%,#fdfdfd 50%,#f1f1f3 51%,#ececef 100%);border:1px solid #dcdce4"></div>
<div class="ab" style="left:18px;top:576px;width:1559px;height:23px;background:#b0c4de"></div>
<div class="ab" style="left:-1px;top:576px;width:19px;height:23px;background:#f2f2f8"></div>
<div class="ab" style="left:-1px;top:598px;width:19px;height:1px;background:#d4d4dc"></div>
<div class="ab" style="left:1px;top:578px;width:15px;height:19px;background:linear-gradient(#fff 0%,#fdfdfd 50%,#f1f1f3 51%,#ececef 100%);border:1px solid #dcdce4"></div>
<div class="ab" style="left:18px;top:599px;width:1559px;height:23px;background:#ffffff"></div>
<div class="ab" style="left:-1px;top:599px;width:19px;height:23px;background:#f2f2f8"></div>
<div class="ab" style="left:-1px;top:621px;width:19px;height:1px;background:#d4d4dc"></div>
<div class="ab" style="left:1px;top:601px;width:15px;height:19px;background:linear-gradient(#fff 0%,#fdfdfd 50%,#f1f1f3 51%,#ececef 100%);border:1px solid #dcdce4"></div>
<div class="ab" style="left:18px;top:622px;width:1559px;height:23px;background:#b0c4de"></div>
<div class="ab" style="left:-1px;top:622px;width:19px;height:23px;background:#f2f2f8"></div>
<div class="ab" style="left:-1px;top:644px;width:19px;height:1px;background:#d4d4dc"></div>
<div class="ab" style="left:1px;top:624px;width:15px;height:19px;background:linear-gradient(#fff 0%,#fdfdfd 50%,#f1f1f3 51%,#ececef 100%);border:1px solid #dcdce4"></div>
<div class="ab" style="left:18px;top:645px;width:1559px;height:23px;background:#ffffff"></div>
<div class="ab" style="left:-1px;top:645px;width:19px;height:23px;background:#f2f2f8"></div>
<div class="ab" style="left:-1px;top:667px;width:19px;height:1px;background:#d4d4dc"></div>
<div class="ab" style="left:1px;top:647px;width:15px;height:19px;background:linear-gradient(#fff 0%,#fdfdfd 50%,#f1f1f3 51%,#ececef 100%);border:1px solid #dcdce4"></div>
<div class="ab" style="left:18px;top:668px;width:1559px;height:23px;background:#b0c4de"></div>
<div class="ab" style="left:-1px;top:668px;width:19px;height:23px;background:#f2f2f8"></div>
<div class="ab" style="left:-1px;top:690px;width:19px;height:1px;background:#d4d4dc"></div>
<div class="ab" style="left:1px;top:670px;width:15px;height:19px;background:linear-gradient(#fff 0%,#fdfdfd 50%,#f1f1f3 51%,#ececef 100%);border:1px solid #dcdce4"></div>
<div class="ab" style="left:18px;top:691px;width:1559px;height:23px;background:#ffffff"></div>
<div class="ab" style="left:-1px;top:691px;width:19px;height:23px;background:#f2f2f8"></div>
<div class="ab" style="left:-1px;top:713px;width:19px;height:1px;background:#d4d4dc"></div>
<div class="ab" style="left:1px;top:693px;width:15px;height:19px;background:linear-gradient(#fff 0%,#fdfdfd 50%,#f1f1f3 51%,#ececef 100%);border:1px solid #dcdce4"></div>
<div class="ab" style="left:18px;top:714px;width:1559px;height:23px;background:#b0c4de"></div>
<div class="ab" style="left:-1px;top:714px;width:19px;height:23px;background:#f2f2f8"></div>
<div class="ab" style="left:-1px;top:736px;width:19px;height:1px;background:#d4d4dc"></div>
<div class="ab" style="left:1px;top:716px;width:15px;height:19px;background:linear-gradient(#fff 0%,#fdfdfd 50%,#f1f1f3 51%,#ececef 100%);border:1px solid #dcdce4"></div>
<div class="ab" style="left:18px;top:24px;width:1559px;height:1px;background:#a4a8b0"></div>
<div class="ab" style="left:18px;top:47px;width:1559px;height:1px;background:#b9c1cc"></div>
<div class="ab" style="left:18px;top:70px;width:1559px;height:1px;background:#a4a8b0"></div>
<div class="ab" style="left:18px;top:93px;width:1559px;height:1px;background:#b9c1cc"></div>
<div class="ab" style="left:18px;top:116px;width:1559px;height:1px;background:#a4a8b0"></div>
<div class="ab" style="left:18px;top:139px;width:1559px;height:1px;background:#b9c1cc"></div>
<div class="ab" style="left:18px;top:162px;width:1559px;height:1px;background:#a4a8b0"></div>
<div class="ab" style="left:18px;top:185px;width:1559px;height:1px;background:#b9c1cc"></div>
<div class="ab" style="left:18px;top:208px;width:1559px;height:1px;background:#a4a8b0"></div>
<div class="ab" style="left:18px;top:231px;width:1559px;height:1px;background:#b9c1cc"></div>
<div class="ab" style="left:18px;top:254px;width:1559px;height:1px;background:#a4a8b0"></div>
<div class="ab" style="left:18px;top:277px;width:1559px;height:1px;background:#b9c1cc"></div>
<div class="ab" style="left:18px;top:300px;width:1559px;height:1px;background:#a4a8b0"></div>
<div class="ab" style="left:18px;top:323px;width:1559px;height:1px;background:#b9c1cc"></div>
<div class="ab" style="left:18px;top:346px;width:1559px;height:1px;background:#a4a8b0"></div>
<div class="ab" style="left:18px;top:369px;width:1559px;height:1px;background:#b9c1cc"></div>
<div class="ab" style="left:18px;top:392px;width:1559px;height:1px;background:#a4a8b0"></div>
<div class="ab" style="left:18px;top:415px;width:1559px;height:1px;background:#b9c1cc"></div>
<div class="ab" style="left:18px;top:438px;width:1559px;height:1px;background:#a4a8b0"></div>
<div class="ab" style="left:18px;top:461px;width:1559px;height:1px;background:#b9c1cc"></div>
<div class="ab" style="left:18px;top:484px;width:1559px;height:1px;background:#a4a8b0"></div>
<div class="ab" style="left:18px;top:507px;width:1559px;height:1px;background:#b9c1cc"></div>
<div class="ab" style="left:18px;top:530px;width:1559px;height:1px;background:#a4a8b0"></div>
<div class="ab" style="left:18px;top:553px;width:1559px;height:1px;background:#b9c1cc"></div>
<div class="ab" style="left:18px;top:576px;width:1559px;height:1px;background:#a4a8b0"></div>
<div class="ab" style="left:18px;top:599px;width:1559px;height:1px;background:#b9c1cc"></div>
<div class="ab" style="left:18px;top:622px;width:1559px;height:1px;background:#a4a8b0"></div>
<div class="ab" style="left:18px;top:645px;width:1559px;height:1px;background:#b9c1cc"></div>
<div class="ab" style="left:18px;top:668px;width:1559px;height:1px;background:#a4a8b0"></div>
<div class="ab" style="left:18px;top:691px;width:1559px;height:1px;background:#b9c1cc"></div>
<div class="ab" style="left:18px;top:714px;width:1559px;height:1px;background:#a4a8b0"></div>
<div class="ab" style="left:18px;top:737px;width:1559px;height:1px;background:#b9c1cc"></div>
<div class="ab" style="left:18px;top:0;width:1px;height:729px;background:#ababab"></div>
<div class="ab" style="left:121px;top:0;width:1px;height:729px;background:#ababab"></div>
<div class="ab" style="left:219px;top:0;width:1px;height:729px;background:#ababab"></div>
<div class="ab" style="left:305px;top:0;width:1px;height:729px;background:#ababab"></div>
<div class="ab" style="left:399px;top:0;width:1px;height:729px;background:#ababab"></div>
<div class="ab" style="left:494px;top:0;width:1px;height:729px;background:#ababab"></div>
<div class="ab" style="left:588px;top:0;width:1px;height:729px;background:#ababab"></div>
<div class="ab" style="left:707px;top:0;width:1px;height:729px;background:#ababab"></div>
<div class="ab" style="left:827px;top:0;width:1px;height:729px;background:#ababab"></div>
<div class="ab" style="left:907px;top:0;width:1px;height:729px;background:#ababab"></div>
<div class="ab" style="left:1035px;top:0;width:1px;height:729px;background:#ababab"></div>
<div class="ab" style="left:1109px;top:0;width:1px;height:729px;background:#ababab"></div>
<div class="ab" style="left:1190px;top:0;width:1px;height:729px;background:#ababab"></div>
<div class="ab" style="left:1249px;top:0;width:1px;height:729px;background:#ababab"></div>
<div class="ab" style="left:1322px;top:0;width:1px;height:729px;background:#ababab"></div>
<div class="ab" style="left:1387px;top:0;width:1px;height:729px;background:#ababab"></div>
<div class="ab" style="left:1453px;top:0;width:1px;height:729px;background:#ababab"></div>
<div class="ab" style="left:1519px;top:0;width:1px;height:729px;background:#ababab"></div>
<svg class="ab" style="left:5px;top:8px" width="6" height="10"><path d="M0 0l5.5 5L0 10z" fill="#000"/></svg>
<div class="t" style="left:24px;top:6px;color:#1f1fae">SIM-00001</div>
<div class="t" style="left:128px;top:6px;color:#1f1fae">Mr.Toshiki Koga</div>
<div class="t" style="left:226px;top:6px;color:#1f1fae">Shacho</div>
<div class="t" style="left:306px;top:6px;width:94px;text-align:center;color:#1f1fae;letter-spacing:0.5px;">26/12/2022</div>
<div class="t" style="left:408px;top:6px;color:#222">M</div>
<div class="t" style="left:501px;top:6px;color:#1f1fae">MONTHLY</div>
<div class="t" style="left:596px;top:6px;color:#1f1fae">1</div>
<div class="t" style="left:709px;top:6px;width:120px;text-align:center;color:#1f1fae;">Working Day</div>
<div class="t" style="left:827px;top:6px;width:76px;text-align:right;color:#1f1fae">9:00</div>
<div class="t" style="left:907px;top:6px;width:124px;text-align:right;color:#1f1fae">17:30</div>
<div class="t" style="left:1035px;top:6px;width:70px;text-align:right;color:#222">8:29</div>
<div class="t" style="left:1109px;top:6px;width:77px;text-align:right;color:#222">21:32</div>
<svg class="ab" style="left:1213px;top:6px" width="13" height="13"><rect x="0.5" y="0.5" width="12" height="12" fill="#eef2f8" stroke="#c4ccd8"/><rect x="1.5" y="1.5" width="10" height="10" fill="#dfe5ee" stroke="#f4f6fa"/><path d="M3.2 6.4l2.4 3.2 4.2-7" fill="none" stroke="#4a6494" stroke-width="1.7"/></svg>
<div class="t" style="left:1249px;top:6px;width:69px;text-align:right;color:#222">0</div>
<div class="t" style="left:1322px;top:6px;width:61px;text-align:right;color:#222">270</div>
<div class="t" style="left:1387px;top:6px;width:62px;text-align:right;color:#222">0</div>
<div class="t" style="left:1453px;top:6px;width:62px;text-align:right;color:#222">0</div>
<div class="t" style="left:1519px;top:6px;width:54px;text-align:right;color:#222">0</div>
<div class="t" style="left:24px;top:29px;color:#1f1fae">SIM-00001</div>
<div class="t" style="left:128px;top:29px;color:#1f1fae">Mr.Toshiki Koga</div>
<div class="t" style="left:226px;top:29px;color:#1f1fae">Shacho</div>
<div class="t" style="left:306px;top:29px;width:94px;text-align:center;color:#1f1fae;letter-spacing:0.5px;">27/12/2022</div>
<div class="t" style="left:408px;top:29px;color:#222">M</div>
<div class="t" style="left:501px;top:29px;color:#1f1fae">MONTHLY</div>
<div class="t" style="left:596px;top:29px;color:#1f1fae">1</div>
<div class="t" style="left:709px;top:29px;width:120px;text-align:center;color:#1f1fae;">Working Day</div>
<div class="t" style="left:827px;top:29px;width:76px;text-align:right;color:#1f1fae">9:00</div>
<div class="t" style="left:907px;top:29px;width:124px;text-align:right;color:#1f1fae">17:30</div>
<div class="t" style="left:1035px;top:29px;width:70px;text-align:right;color:#222">8:25</div>
<div class="t" style="left:1109px;top:29px;width:77px;text-align:right;color:#222">17:40</div>
<svg class="ab" style="left:1213px;top:29px" width="13" height="13"><rect x="0.5" y="0.5" width="12" height="12" fill="#eef2f8" stroke="#c4ccd8"/><rect x="1.5" y="1.5" width="10" height="10" fill="#dfe5ee" stroke="#f4f6fa"/><path d="M3.2 6.4l2.4 3.2 4.2-7" fill="none" stroke="#4a6494" stroke-width="1.7"/></svg>
<div class="t" style="left:1249px;top:29px;width:69px;text-align:right;color:#222">0</div>
<div class="t" style="left:1322px;top:29px;width:61px;text-align:right;color:#222">30</div>
<div class="t" style="left:1387px;top:29px;width:62px;text-align:right;color:#222">0</div>
<div class="t" style="left:1453px;top:29px;width:62px;text-align:right;color:#222">0</div>
<div class="t" style="left:1519px;top:29px;width:54px;text-align:right;color:#222">0</div>
<div class="t" style="left:24px;top:52px;color:#1f1fae">SIM-00001</div>
<div class="t" style="left:128px;top:52px;color:#1f1fae">Mr.Toshiki Koga</div>
<div class="t" style="left:226px;top:52px;color:#1f1fae">Shacho</div>
<div class="t" style="left:306px;top:52px;width:94px;text-align:center;color:#1f1fae;letter-spacing:0.5px;">28/12/2022</div>
<div class="t" style="left:408px;top:52px;color:#222">M</div>
<div class="t" style="left:501px;top:52px;color:#1f1fae">MONTHLY</div>
<div class="t" style="left:596px;top:52px;color:#1f1fae">1</div>
<div class="t" style="left:709px;top:52px;width:120px;text-align:center;color:#1f1fae;">Working Day</div>
<div class="t" style="left:827px;top:52px;width:76px;text-align:right;color:#1f1fae">9:00</div>
<div class="t" style="left:907px;top:52px;width:124px;text-align:right;color:#1f1fae">17:30</div>
<div class="t" style="left:1035px;top:52px;width:70px;text-align:right;color:#222">8:35</div>
<div class="t" style="left:1109px;top:52px;width:77px;text-align:right;color:#222">17:40</div>
<svg class="ab" style="left:1213px;top:52px" width="13" height="13"><rect x="0.5" y="0.5" width="12" height="12" fill="#eef2f8" stroke="#c4ccd8"/><rect x="1.5" y="1.5" width="10" height="10" fill="#dfe5ee" stroke="#f4f6fa"/><path d="M3.2 6.4l2.4 3.2 4.2-7" fill="none" stroke="#4a6494" stroke-width="1.7"/></svg>
<div class="t" style="left:1249px;top:52px;width:69px;text-align:right;color:#222">0</div>
<div class="t" style="left:1322px;top:52px;width:61px;text-align:right;color:#222">0</div>
<div class="t" style="left:1387px;top:52px;width:62px;text-align:right;color:#222">0</div>
<div class="t" style="left:1453px;top:52px;width:62px;text-align:right;color:#222">0</div>
<div class="t" style="left:1519px;top:52px;width:54px;text-align:right;color:#222">0</div>
<div class="t" style="left:24px;top:75px;color:#1f1fae">SIM-00001</div>
<div class="t" style="left:128px;top:75px;color:#1f1fae">Mr.Toshiki Koga</div>
<div class="t" style="left:226px;top:75px;color:#1f1fae">Shacho</div>
<div class="t" style="left:306px;top:75px;width:94px;text-align:center;color:#1f1fae;letter-spacing:0.5px;">29/12/2022</div>
<div class="t" style="left:408px;top:75px;color:#222">M</div>
<div class="t" style="left:501px;top:75px;color:#1f1fae">MONTHLY</div>
<div class="t" style="left:596px;top:75px;color:#1f1fae">1</div>
<div class="t" style="left:709px;top:75px;width:120px;text-align:center;color:#1f1fae;">Working Day</div>
<div class="t" style="left:827px;top:75px;width:76px;text-align:right;color:#1f1fae">9:00</div>
<div class="t" style="left:907px;top:75px;width:124px;text-align:right;color:#1f1fae">17:30</div>
<div class="t" style="left:1035px;top:75px;width:70px;text-align:right;color:#222">9:30</div>
<div class="t" style="left:1109px;top:75px;width:77px;text-align:right;color:#222">17:46</div>
<svg class="ab" style="left:1213px;top:75px" width="13" height="13"><rect x="0.5" y="0.5" width="12" height="12" fill="#eef2f8" stroke="#c4ccd8"/><rect x="1.5" y="1.5" width="10" height="10" fill="#dfe5ee" stroke="#f4f6fa"/><path d="M3.2 6.4l2.4 3.2 4.2-7" fill="none" stroke="#4a6494" stroke-width="1.7"/></svg>
<div class="t" style="left:1249px;top:75px;width:69px;text-align:right;color:#222">0</div>
<div class="t" style="left:1322px;top:75px;width:61px;text-align:right;color:#222">0</div>
<div class="t" style="left:1387px;top:75px;width:62px;text-align:right;color:#222">0</div>
<div class="t" style="left:1453px;top:75px;width:62px;text-align:right;color:#222">0</div>
<div class="t" style="left:1519px;top:75px;width:54px;text-align:right;color:#222">30</div>
<div class="t" style="left:24px;top:98px;color:#1f1fae">SIM-00001</div>
<div class="t" style="left:128px;top:98px;color:#1f1fae">Mr.Toshiki Koga</div>
<div class="t" style="left:226px;top:98px;color:#1f1fae">Shacho</div>
<div class="t" style="left:306px;top:98px;width:94px;text-align:center;color:#1f1fae;letter-spacing:0.5px;">30/12/2022</div>
<div class="t" style="left:408px;top:98px;color:#222">H</div>
<div class="t" style="left:501px;top:98px;color:#1f1fae">MONTHLY</div>
<div class="t" style="left:596px;top:98px;color:#1f1fae">1</div>
<div class="t" style="left:709px;top:98px;width:120px;text-align:center;color:#1f1fae;">Holiday</div>
<div class="t" style="left:827px;top:98px;width:76px;text-align:right;color:#1f1fae">8:30</div>
<div class="t" style="left:907px;top:98px;width:124px;text-align:right;color:#1f1fae">17:30</div>
<div class="t" style="left:1035px;top:98px;width:70px;text-align:right;color:#222">0:00</div>
<div class="t" style="left:1109px;top:98px;width:77px;text-align:right;color:#222">0:00</div>
<svg class="ab" style="left:1213px;top:98px" width="13" height="13"><defs><linearGradient id="cg4" x1="0" y1="0" x2="1" y2="1"><stop offset="0" stop-color="#d4d4d4"/><stop offset="1" stop-color="#f8f8f8"/></linearGradient></defs><rect x="0.5" y="0.5" width="12" height="12" fill="#fff" stroke="#bcc4d0"/><rect x="2" y="2" width="9" height="9" fill="url(#cg4)"/></svg>
<div class="t" style="left:1249px;top:98px;width:69px;text-align:right;color:#222">0</div>
<div class="t" style="left:1322px;top:98px;width:61px;text-align:right;color:#222">0</div>
<div class="t" style="left:1387px;top:98px;width:62px;text-align:right;color:#222">0</div>
<div class="t" style="left:1453px;top:98px;width:62px;text-align:right;color:#222">0</div>
<div class="t" style="left:1519px;top:98px;width:54px;text-align:right;color:#222">0</div>
<div class="t" style="left:24px;top:121px;color:#1f1fae">SIM-00001</div>
<div class="t" style="left:128px;top:121px;color:#1f1fae">Mr.Toshiki Koga</div>
<div class="t" style="left:226px;top:121px;color:#1f1fae">Shacho</div>
<div class="t" style="left:306px;top:121px;width:94px;text-align:center;color:#1f1fae;letter-spacing:0.5px;">31/12/2022</div>
<div class="t" style="left:408px;top:121px;color:#222">H</div>
<div class="t" style="left:501px;top:121px;color:#1f1fae">MONTHLY</div>
<div class="t" style="left:596px;top:121px;color:#1f1fae">1</div>
<div class="t" style="left:709px;top:121px;width:120px;text-align:center;color:#1f1fae;">Holiday</div>
<div class="t" style="left:827px;top:121px;width:76px;text-align:right;color:#1f1fae">8:30</div>
<div class="t" style="left:907px;top:121px;width:124px;text-align:right;color:#1f1fae">17:30</div>
<div class="t" style="left:1035px;top:121px;width:70px;text-align:right;color:#222">0:00</div>
<div class="t" style="left:1109px;top:121px;width:77px;text-align:right;color:#222">0:00</div>
<svg class="ab" style="left:1213px;top:121px" width="13" height="13"><defs><linearGradient id="cg5" x1="0" y1="0" x2="1" y2="1"><stop offset="0" stop-color="#d4d4d4"/><stop offset="1" stop-color="#f8f8f8"/></linearGradient></defs><rect x="0.5" y="0.5" width="12" height="12" fill="#fff" stroke="#bcc4d0"/><rect x="2" y="2" width="9" height="9" fill="url(#cg5)"/></svg>
<div class="t" style="left:1249px;top:121px;width:69px;text-align:right;color:#222">0</div>
<div class="t" style="left:1322px;top:121px;width:61px;text-align:right;color:#222">0</div>
<div class="t" style="left:1387px;top:121px;width:62px;text-align:right;color:#222">0</div>
<div class="t" style="left:1453px;top:121px;width:62px;text-align:right;color:#222">0</div>
<div class="t" style="left:1519px;top:121px;width:54px;text-align:right;color:#222">0</div>
<div class="t" style="left:24px;top:144px;color:#1f1fae">SIM-00001</div>
<div class="t" style="left:128px;top:144px;color:#1f1fae">Mr.Toshiki Koga</div>
<div class="t" style="left:226px;top:144px;color:#1f1fae">Shacho</div>
<div class="t" style="left:306px;top:144px;width:94px;text-align:center;color:#1f1fae;letter-spacing:0.5px;">01/01/2023</div>
<div class="t" style="left:408px;top:144px;color:#222">H</div>
<div class="t" style="left:501px;top:144px;color:#1f1fae">MONTHLY</div>
<div class="t" style="left:596px;top:144px;color:#1f1fae">1</div>
<div class="t" style="left:709px;top:144px;width:120px;text-align:center;color:#1f1fae;">Holiday</div>
<div class="t" style="left:827px;top:144px;width:76px;text-align:right;color:#1f1fae">8:30</div>
<div class="t" style="left:907px;top:144px;width:124px;text-align:right;color:#1f1fae">17:30</div>
<div class="t" style="left:1035px;top:144px;width:70px;text-align:right;color:#222">0:00</div>
<div class="t" style="left:1109px;top:144px;width:77px;text-align:right;color:#222">0:00</div>
<svg class="ab" style="left:1213px;top:144px" width="13" height="13"><defs><linearGradient id="cg6" x1="0" y1="0" x2="1" y2="1"><stop offset="0" stop-color="#d4d4d4"/><stop offset="1" stop-color="#f8f8f8"/></linearGradient></defs><rect x="0.5" y="0.5" width="12" height="12" fill="#fff" stroke="#bcc4d0"/><rect x="2" y="2" width="9" height="9" fill="url(#cg6)"/></svg>
<div class="t" style="left:1249px;top:144px;width:69px;text-align:right;color:#222">0</div>
<div class="t" style="left:1322px;top:144px;width:61px;text-align:right;color:#222">0</div>
<div class="t" style="left:1387px;top:144px;width:62px;text-align:right;color:#222">0</div>
<div class="t" style="left:1453px;top:144px;width:62px;text-align:right;color:#222">0</div>
<div class="t" style="left:1519px;top:144px;width:54px;text-align:right;color:#222">0</div>
<div class="t" style="left:24px;top:167px;color:#1f1fae">SIM-00001</div>
<div class="t" style="left:128px;top:167px;color:#1f1fae">Mr.Toshiki Koga</div>
<div class="t" style="left:226px;top:167px;color:#1f1fae">Shacho</div>
<div class="t" style="left:306px;top:167px;width:94px;text-align:center;color:#1f1fae;letter-spacing:0.5px;">02/01/2023</div>
<div class="t" style="left:408px;top:167px;color:#222">H</div>
<div class="t" style="left:501px;top:167px;color:#1f1fae">MONTHLY</div>
<div class="t" style="left:596px;top:167px;color:#1f1fae">1</div>
<div class="t" style="left:709px;top:167px;width:120px;text-align:center;color:#1f1fae;">Holiday</div>
<div class="t" style="left:827px;top:167px;width:76px;text-align:right;color:#1f1fae">8:30</div>
<div class="t" style="left:907px;top:167px;width:124px;text-align:right;color:#1f1fae">17:30</div>
<div class="t" style="left:1035px;top:167px;width:70px;text-align:right;color:#222">0:00</div>
<div class="t" style="left:1109px;top:167px;width:77px;text-align:right;color:#222">0:00</div>
<svg class="ab" style="left:1213px;top:167px" width="13" height="13"><defs><linearGradient id="cg7" x1="0" y1="0" x2="1" y2="1"><stop offset="0" stop-color="#d4d4d4"/><stop offset="1" stop-color="#f8f8f8"/></linearGradient></defs><rect x="0.5" y="0.5" width="12" height="12" fill="#fff" stroke="#bcc4d0"/><rect x="2" y="2" width="9" height="9" fill="url(#cg7)"/></svg>
<div class="t" style="left:1249px;top:167px;width:69px;text-align:right;color:#222">0</div>
<div class="t" style="left:1322px;top:167px;width:61px;text-align:right;color:#222">0</div>
<div class="t" style="left:1387px;top:167px;width:62px;text-align:right;color:#222">0</div>
<div class="t" style="left:1453px;top:167px;width:62px;text-align:right;color:#222">0</div>
<div class="t" style="left:1519px;top:167px;width:54px;text-align:right;color:#222">0</div>
<div class="t" style="left:24px;top:190px;color:#1f1fae">SIM-00001</div>
<div class="t" style="left:128px;top:190px;color:#1f1fae">Mr.Toshiki Koga</div>
<div class="t" style="left:226px;top:190px;color:#1f1fae">Shacho</div>
<div class="t" style="left:306px;top:190px;width:94px;text-align:center;color:#1f1fae;letter-spacing:0.5px;">03/01/2023</div>
<div class="t" style="left:408px;top:190px;color:#222">M</div>
<div class="t" style="left:501px;top:190px;color:#1f1fae">MONTHLY</div>
<div class="t" style="left:596px;top:190px;color:#1f1fae">1</div>
<div class="t" style="left:709px;top:190px;width:120px;text-align:center;color:#1f1fae;">Working Day</div>
<div class="t" style="left:827px;top:190px;width:76px;text-align:right;color:#1f1fae">9:00</div>
<div class="t" style="left:907px;top:190px;width:124px;text-align:right;color:#1f1fae">17:30</div>
<div class="t" style="left:1035px;top:190px;width:70px;text-align:right;color:#222">8:52</div>
<div class="t" style="left:1109px;top:190px;width:77px;text-align:right;color:#222">17:40</div>
<svg class="ab" style="left:1213px;top:190px" width="13" height="13"><rect x="0.5" y="0.5" width="12" height="12" fill="#eef2f8" stroke="#c4ccd8"/><rect x="1.5" y="1.5" width="10" height="10" fill="#dfe5ee" stroke="#f4f6fa"/><path d="M3.2 6.4l2.4 3.2 4.2-7" fill="none" stroke="#4a6494" stroke-width="1.7"/></svg>
<div class="t" style="left:1249px;top:190px;width:69px;text-align:right;color:#222">0</div>
<div class="t" style="left:1322px;top:190px;width:61px;text-align:right;color:#222">0</div>
<div class="t" style="left:1387px;top:190px;width:62px;text-align:right;color:#222">0</div>
<div class="t" style="left:1453px;top:190px;width:62px;text-align:right;color:#222">0</div>
<div class="t" style="left:1519px;top:190px;width:54px;text-align:right;color:#222">0</div>
<div class="t" style="left:24px;top:213px;color:#1f1fae">SIM-00001</div>
<div class="t" style="left:128px;top:213px;color:#1f1fae">Mr.Toshiki Koga</div>
<div class="t" style="left:226px;top:213px;color:#1f1fae">Shacho</div>
<div class="t" style="left:306px;top:213px;width:94px;text-align:center;color:#1f1fae;letter-spacing:0.5px;">04/01/2023</div>
<div class="t" style="left:408px;top:213px;color:#222">M</div>
<div class="t" style="left:501px;top:213px;color:#1f1fae">MONTHLY</div>
<div class="t" style="left:596px;top:213px;color:#1f1fae">1</div>
<div class="t" style="left:709px;top:213px;width:120px;text-align:center;color:#1f1fae;">Working Day</div>
<div class="t" style="left:827px;top:213px;width:76px;text-align:right;color:#1f1fae">9:00</div>
<div class="t" style="left:907px;top:213px;width:124px;text-align:right;color:#1f1fae">17:30</div>
<div class="t" style="left:1035px;top:213px;width:70px;text-align:right;color:#222">8:28</div>
<div class="t" style="left:1109px;top:213px;width:77px;text-align:right;color:#222">17:42</div>
<svg class="ab" style="left:1213px;top:213px" width="13" height="13"><rect x="0.5" y="0.5" width="12" height="12" fill="#eef2f8" stroke="#c4ccd8"/><rect x="1.5" y="1.5" width="10" height="10" fill="#dfe5ee" stroke="#f4f6fa"/><path d="M3.2 6.4l2.4 3.2 4.2-7" fill="none" stroke="#4a6494" stroke-width="1.7"/></svg>
<div class="t" style="left:1249px;top:213px;width:69px;text-align:right;color:#222">0</div>
<div class="t" style="left:1322px;top:213px;width:61px;text-align:right;color:#222">30</div>
<div class="t" style="left:1387px;top:213px;width:62px;text-align:right;color:#222">0</div>
<div class="t" style="left:1453px;top:213px;width:62px;text-align:right;color:#222">0</div>
<div class="t" style="left:1519px;top:213px;width:54px;text-align:right;color:#222">0</div>
<div class="t" style="left:24px;top:236px;color:#1f1fae">SIM-00001</div>
<div class="t" style="left:128px;top:236px;color:#1f1fae">Mr.Toshiki Koga</div>
<div class="t" style="left:226px;top:236px;color:#1f1fae">Shacho</div>
<div class="t" style="left:306px;top:236px;width:94px;text-align:center;color:#1f1fae;letter-spacing:0.5px;">05/01/2023</div>
<div class="t" style="left:408px;top:236px;color:#222">M</div>
<div class="t" style="left:501px;top:236px;color:#1f1fae">MONTHLY</div>
<div class="t" style="left:596px;top:236px;color:#1f1fae">1</div>
<div class="t" style="left:709px;top:236px;width:120px;text-align:center;color:#1f1fae;">Working Day</div>
<div class="t" style="left:827px;top:236px;width:76px;text-align:right;color:#1f1fae">9:00</div>
<div class="t" style="left:907px;top:236px;width:124px;text-align:right;color:#1f1fae">17:30</div>
<div class="t" style="left:1035px;top:236px;width:70px;text-align:right;color:#222">8:51</div>
<div class="t" style="left:1109px;top:236px;width:77px;text-align:right;color:#222">17:36</div>
<svg class="ab" style="left:1213px;top:236px" width="13" height="13"><rect x="0.5" y="0.5" width="12" height="12" fill="#eef2f8" stroke="#c4ccd8"/><rect x="1.5" y="1.5" width="10" height="10" fill="#dfe5ee" stroke="#f4f6fa"/><path d="M3.2 6.4l2.4 3.2 4.2-7" fill="none" stroke="#4a6494" stroke-width="1.7"/></svg>
<div class="t" style="left:1249px;top:236px;width:69px;text-align:right;color:#222">0</div>
<div class="t" style="left:1322px;top:236px;width:61px;text-align:right;color:#222">0</div>
<div class="t" style="left:1387px;top:236px;width:62px;text-align:right;color:#222">0</div>
<div class="t" style="left:1453px;top:236px;width:62px;text-align:right;color:#222">0</div>
<div class="t" style="left:1519px;top:236px;width:54px;text-align:right;color:#222">0</div>
<div class="t" style="left:24px;top:259px;color:#1f1fae">SIM-00001</div>
<div class="t" style="left:128px;top:259px;color:#1f1fae">Mr.Toshiki Koga</div>
<div class="t" style="left:226px;top:259px;color:#1f1fae">Shacho</div>
<div class="t" style="left:306px;top:259px;width:94px;text-align:center;color:#1f1fae;letter-spacing:0.5px;">06/01/2023</div>
<div class="t" style="left:408px;top:259px;color:#222">M</div>
<div class="t" style="left:501px;top:259px;color:#1f1fae">MONTHLY</div>
<div class="t" style="left:596px;top:259px;color:#1f1fae">1</div>
<div class="t" style="left:709px;top:259px;width:120px;text-align:center;color:#1f1fae;">Working Day</div>
<div class="t" style="left:827px;top:259px;width:76px;text-align:right;color:#1f1fae">9:00</div>
<div class="t" style="left:907px;top:259px;width:124px;text-align:right;color:#1f1fae">17:30</div>
<div class="t" style="left:1035px;top:259px;width:70px;text-align:right;color:#222">8:52</div>
<div class="t" style="left:1109px;top:259px;width:77px;text-align:right;color:#222">17:37</div>
<svg class="ab" style="left:1213px;top:259px" width="13" height="13"><rect x="0.5" y="0.5" width="12" height="12" fill="#eef2f8" stroke="#c4ccd8"/><rect x="1.5" y="1.5" width="10" height="10" fill="#dfe5ee" stroke="#f4f6fa"/><path d="M3.2 6.4l2.4 3.2 4.2-7" fill="none" stroke="#4a6494" stroke-width="1.7"/></svg>
<div class="t" style="left:1249px;top:259px;width:69px;text-align:right;color:#222">0</div>
<div class="t" style="left:1322px;top:259px;width:61px;text-align:right;color:#222">0</div>
<div class="t" style="left:1387px;top:259px;width:62px;text-align:right;color:#222">0</div>
<div class="t" style="left:1453px;top:259px;width:62px;text-align:right;color:#222">0</div>
<div class="t" style="left:1519px;top:259px;width:54px;text-align:right;color:#222">0</div>
<div class="t" style="left:24px;top:282px;color:#1f1fae">SIM-00001</div>
<div class="t" style="left:128px;top:282px;color:#1f1fae">Mr.Toshiki Koga</div>
<div class="t" style="left:226px;top:282px;color:#1f1fae">Shacho</div>
<div class="t" style="left:306px;top:282px;width:94px;text-align:center;color:#1f1fae;letter-spacing:0.5px;">07/01/2023</div>
<div class="t" style="left:408px;top:282px;color:#222">H</div>
<div class="t" style="left:501px;top:282px;color:#1f1fae">MONTHLY</div>
<div class="t" style="left:596px;top:282px;color:#1f1fae">1</div>
<div class="t" style="left:709px;top:282px;width:120px;text-align:center;color:#1f1fae;">Holiday</div>
<div class="t" style="left:827px;top:282px;width:76px;text-align:right;color:#1f1fae">8:30</div>
<div class="t" style="left:907px;top:282px;width:124px;text-align:right;color:#1f1fae">17:30</div>
<div class="t" style="left:1035px;top:282px;width:70px;text-align:right;color:#222">0:00</div>
<div class="t" style="left:1109px;top:282px;width:77px;text-align:right;color:#222">0:00</div>
<svg class="ab" style="left:1213px;top:282px" width="13" height="13"><defs><linearGradient id="cg12" x1="0" y1="0" x2="1" y2="1"><stop offset="0" stop-color="#d4d4d4"/><stop offset="1" stop-color="#f8f8f8"/></linearGradient></defs><rect x="0.5" y="0.5" width="12" height="12" fill="#fff" stroke="#bcc4d0"/><rect x="2" y="2" width="9" height="9" fill="url(#cg12)"/></svg>
<div class="t" style="left:1249px;top:282px;width:69px;text-align:right;color:#222">0</div>
<div class="t" style="left:1322px;top:282px;width:61px;text-align:right;color:#222">0</div>
<div class="t" style="left:1387px;top:282px;width:62px;text-align:right;color:#222">0</div>
<div class="t" style="left:1453px;top:282px;width:62px;text-align:right;color:#222">0</div>
<div class="t" style="left:1519px;top:282px;width:54px;text-align:right;color:#222">0</div>
<div class="t" style="left:24px;top:305px;color:#1f1fae">SIM-00001</div>
<div class="t" style="left:128px;top:305px;color:#1f1fae">Mr.Toshiki Koga</div>
<div class="t" style="left:226px;top:305px;color:#1f1fae">Shacho</div>
<div class="t" style="left:306px;top:305px;width:94px;text-align:center;color:#1f1fae;letter-spacing:0.5px;">08/01/2023</div>
<div class="t" style="left:408px;top:305px;color:#222">H</div>
<div class="t" style="left:501px;top:305px;color:#1f1fae">MONTHLY</div>
<div class="t" style="left:596px;top:305px;color:#1f1fae">1</div>
<div class="t" style="left:709px;top:305px;width:120px;text-align:center;color:#1f1fae;">Holiday</div>
<div class="t" style="left:827px;top:305px;width:76px;text-align:right;color:#1f1fae">8:30</div>
<div class="t" style="left:907px;top:305px;width:124px;text-align:right;color:#1f1fae">17:30</div>
<div class="t" style="left:1035px;top:305px;width:70px;text-align:right;color:#222">0:00</div>
<div class="t" style="left:1109px;top:305px;width:77px;text-align:right;color:#222">0:00</div>
<svg class="ab" style="left:1213px;top:305px" width="13" height="13"><defs><linearGradient id="cg13" x1="0" y1="0" x2="1" y2="1"><stop offset="0" stop-color="#d4d4d4"/><stop offset="1" stop-color="#f8f8f8"/></linearGradient></defs><rect x="0.5" y="0.5" width="12" height="12" fill="#fff" stroke="#bcc4d0"/><rect x="2" y="2" width="9" height="9" fill="url(#cg13)"/></svg>
<div class="t" style="left:1249px;top:305px;width:69px;text-align:right;color:#222">0</div>
<div class="t" style="left:1322px;top:305px;width:61px;text-align:right;color:#222">0</div>
<div class="t" style="left:1387px;top:305px;width:62px;text-align:right;color:#222">0</div>
<div class="t" style="left:1453px;top:305px;width:62px;text-align:right;color:#222">0</div>
<div class="t" style="left:1519px;top:305px;width:54px;text-align:right;color:#222">0</div>
<div class="t" style="left:24px;top:328px;color:#1f1fae">SIM-00001</div>
<div class="t" style="left:128px;top:328px;color:#1f1fae">Mr.Toshiki Koga</div>
<div class="t" style="left:226px;top:328px;color:#1f1fae">Shacho</div>
<div class="t" style="left:306px;top:328px;width:94px;text-align:center;color:#1f1fae;letter-spacing:0.5px;">09/01/2023</div>
<div class="t" style="left:408px;top:328px;color:#222">M</div>
<div class="t" style="left:501px;top:328px;color:#1f1fae">MONTHLY</div>
<div class="t" style="left:596px;top:328px;color:#1f1fae">1</div>
<div class="t" style="left:709px;top:328px;width:120px;text-align:center;color:#1f1fae;">Working Day</div>
<div class="t" style="left:827px;top:328px;width:76px;text-align:right;color:#1f1fae">9:00</div>
<div class="t" style="left:907px;top:328px;width:124px;text-align:right;color:#1f1fae">17:30</div>
<div class="t" style="left:1035px;top:328px;width:70px;text-align:right;color:#222">8:03</div>
<div class="t" style="left:1109px;top:328px;width:77px;text-align:right;color:#222">17:46</div>
<svg class="ab" style="left:1213px;top:328px" width="13" height="13"><rect x="0.5" y="0.5" width="12" height="12" fill="#eef2f8" stroke="#c4ccd8"/><rect x="1.5" y="1.5" width="10" height="10" fill="#dfe5ee" stroke="#f4f6fa"/><path d="M3.2 6.4l2.4 3.2 4.2-7" fill="none" stroke="#4a6494" stroke-width="1.7"/></svg>
<div class="t" style="left:1249px;top:328px;width:69px;text-align:right;color:#222">0</div>
<div class="t" style="left:1322px;top:328px;width:61px;text-align:right;color:#222">30</div>
<div class="t" style="left:1387px;top:328px;width:62px;text-align:right;color:#222">0</div>
<div class="t" style="left:1453px;top:328px;width:62px;text-align:right;color:#222">0</div>
<div class="t" style="left:1519px;top:328px;width:54px;text-align:right;color:#222">0</div>
<div class="t" style="left:24px;top:351px;color:#1f1fae">SIM-00001</div>
<div class="t" style="left:128px;top:351px;color:#1f1fae">Mr.Toshiki Koga</div>
<div class="t" style="left:226px;top:351px;color:#1f1fae">Shacho</div>
<div class="t" style="left:306px;top:351px;width:94px;text-align:center;color:#1f1fae;letter-spacing:0.5px;">10/01/2023</div>
<div class="t" style="left:408px;top:351px;color:#222">M</div>
<div class="t" style="left:501px;top:351px;color:#1f1fae">MONTHLY</div>
<div class="t" style="left:596px;top:351px;color:#1f1fae">1</div>
<div class="t" style="left:709px;top:351px;width:120px;text-align:center;color:#1f1fae;">Working Day</div>
<div class="t" style="left:827px;top:351px;width:76px;text-align:right;color:#1f1fae">9:00</div>
<div class="t" style="left:907px;top:351px;width:124px;text-align:right;color:#1f1fae">17:30</div>
<div class="t" style="left:1035px;top:351px;width:70px;text-align:right;color:#222">8:25</div>
<div class="t" style="left:1109px;top:351px;width:77px;text-align:right;color:#222">17:44</div>
<svg class="ab" style="left:1213px;top:351px" width="13" height="13"><rect x="0.5" y="0.5" width="12" height="12" fill="#eef2f8" stroke="#c4ccd8"/><rect x="1.5" y="1.5" width="10" height="10" fill="#dfe5ee" stroke="#f4f6fa"/><path d="M3.2 6.4l2.4 3.2 4.2-7" fill="none" stroke="#4a6494" stroke-width="1.7"/></svg>
<div class="t" style="left:1249px;top:351px;width:69px;text-align:right;color:#222">0</div>
<div class="t" style="left:1322px;top:351px;width:61px;text-align:right;color:#222">30</div>
<div class="t" style="left:1387px;top:351px;width:62px;text-align:right;color:#222">0</div>
<div class="t" style="left:1453px;top:351px;width:62px;text-align:right;color:#222">0</div>
<div class="t" style="left:1519px;top:351px;width:54px;text-align:right;color:#222">0</div>
<div class="t" style="left:24px;top:374px;color:#1f1fae">SIM-00001</div>
<div class="t" style="left:128px;top:374px;color:#1f1fae">Mr.Toshiki Koga</div>
<div class="t" style="left:226px;top:374px;color:#1f1fae">Shacho</div>
<div class="t" style="left:306px;top:374px;width:94px;text-align:center;color:#1f1fae;letter-spacing:0.5px;">11/01/2023</div>
<div class="t" style="left:408px;top:374px;color:#222">M</div>
<div class="t" style="left:501px;top:374px;color:#1f1fae">MONTHLY</div>
<div class="t" style="left:596px;top:374px;color:#1f1fae">1</div>
<div class="t" style="left:709px;top:374px;width:120px;text-align:center;color:#1f1fae;">Working Day</div>
<div class="t" style="left:827px;top:374px;width:76px;text-align:right;color:#1f1fae">9:00</div>
<div class="t" style="left:907px;top:374px;width:124px;text-align:right;color:#1f1fae">17:30</div>
<div class="t" style="left:1035px;top:374px;width:70px;text-align:right;color:#222">8:57</div>
<div class="t" style="left:1109px;top:374px;width:77px;text-align:right;color:#222">17:47</div>
<svg class="ab" style="left:1213px;top:374px" width="13" height="13"><rect x="0.5" y="0.5" width="12" height="12" fill="#eef2f8" stroke="#c4ccd8"/><rect x="1.5" y="1.5" width="10" height="10" fill="#dfe5ee" stroke="#f4f6fa"/><path d="M3.2 6.4l2.4 3.2 4.2-7" fill="none" stroke="#4a6494" stroke-width="1.7"/></svg>
<div class="t" style="left:1249px;top:374px;width:69px;text-align:right;color:#222">0</div>
<div class="t" style="left:1322px;top:374px;width:61px;text-align:right;color:#222">0</div>
<div class="t" style="left:1387px;top:374px;width:62px;text-align:right;color:#222">0</div>
<div class="t" style="left:1453px;top:374px;width:62px;text-align:right;color:#222">0</div>
<div class="t" style="left:1519px;top:374px;width:54px;text-align:right;color:#222">0</div>
<div class="t" style="left:24px;top:397px;color:#1f1fae">SIM-00001</div>
<div class="t" style="left:128px;top:397px;color:#1f1fae">Mr.Toshiki Koga</div>
<div class="t" style="left:226px;top:397px;color:#1f1fae">Shacho</div>
<div class="t" style="left:306px;top:397px;width:94px;text-align:center;color:#1f1fae;letter-spacing:0.5px;">12/01/2023</div>
<div class="t" style="left:408px;top:397px;color:#222">M</div>
<div class="t" style="left:501px;top:397px;color:#1f1fae">MONTHLY</div>
<div class="t" style="left:596px;top:397px;color:#1f1fae">1</div>
<div class="t" style="left:709px;top:397px;width:120px;text-align:center;color:#1f1fae;">Working Day</div>
<div class="t" style="left:827px;top:397px;width:76px;text-align:right;color:#1f1fae">9:00</div>
<div class="t" style="left:907px;top:397px;width:124px;text-align:right;color:#1f1fae">17:30</div>
<div class="t" style="left:1035px;top:397px;width:70px;text-align:right;color:#222">8:12</div>
<div class="t" style="left:1109px;top:397px;width:77px;text-align:right;color:#222">17:43</div>
<svg class="ab" style="left:1213px;top:397px" width="13" height="13"><rect x="0.5" y="0.5" width="12" height="12" fill="#eef2f8" stroke="#c4ccd8"/><rect x="1.5" y="1.5" width="10" height="10" fill="#dfe5ee" stroke="#f4f6fa"/><path d="M3.2 6.4l2.4 3.2 4.2-7" fill="none" stroke="#4a6494" stroke-width="1.7"/></svg>
<div class="t" style="left:1249px;top:397px;width:69px;text-align:right;color:#222">0</div>
<div class="t" style="left:1322px;top:397px;width:61px;text-align:right;color:#222">30</div>
<div class="t" style="left:1387px;top:397px;width:62px;text-align:right;color:#222">0</div>
<div class="t" style="left:1453px;top:397px;width:62px;text-align:right;color:#222">0</div>
<div class="t" style="left:1519px;top:397px;width:54px;text-align:right;color:#222">0</div>
<div class="t" style="left:24px;top:420px;color:#1f1fae">SIM-00001</div>
<div class="t" style="left:128px;top:420px;color:#1f1fae">Mr.Toshiki Koga</div>
<div class="t" style="left:226px;top:420px;color:#1f1fae">Shacho</div>
<div class="t" style="left:306px;top:420px;width:94px;text-align:center;color:#1f1fae;letter-spacing:0.5px;">13/01/2023</div>
<div class="t" style="left:408px;top:420px;color:#222">M</div>
<div class="t" style="left:501px;top:420px;color:#1f1fae">MONTHLY</div>
<div class="t" style="left:596px;top:420px;color:#1f1fae">1</div>
<div class="t" style="left:709px;top:420px;width:120px;text-align:center;color:#1f1fae;">Working Day</div>
<div class="t" style="left:827px;top:420px;width:76px;text-align:right;color:#1f1fae">9:00</div>
<div class="t" style="left:907px;top:420px;width:124px;text-align:right;color:#1f1fae">17:30</div>
<div class="t" style="left:1035px;top:420px;width:70px;text-align:right;color:#222">8:08</div>
<div class="t" style="left:1109px;top:420px;width:77px;text-align:right;color:#222">17:36</div>
<svg class="ab" style="left:1213px;top:420px" width="13" height="13"><rect x="0.5" y="0.5" width="12" height="12" fill="#eef2f8" stroke="#c4ccd8"/><rect x="1.5" y="1.5" width="10" height="10" fill="#dfe5ee" stroke="#f4f6fa"/><path d="M3.2 6.4l2.4 3.2 4.2-7" fill="none" stroke="#4a6494" stroke-width="1.7"/></svg>
<div class="t" style="left:1249px;top:420px;width:69px;text-align:right;color:#222">0</div>
<div class="t" style="left:1322px;top:420px;width:61px;text-align:right;color:#222">30</div>
<div class="t" style="left:1387px;top:420px;width:62px;text-align:right;color:#222">0</div>
<div class="t" style="left:1453px;top:420px;width:62px;text-align:right;color:#222">0</div>
<div class="t" style="left:1519px;top:420px;width:54px;text-align:right;color:#222">0</div>
<div class="t" style="left:24px;top:443px;color:#1f1fae">SIM-00001</div>
<div class="t" style="left:128px;top:443px;color:#1f1fae">Mr.Toshiki Koga</div>
<div class="t" style="left:226px;top:443px;color:#1f1fae">Shacho</div>
<div class="t" style="left:306px;top:443px;width:94px;text-align:center;color:#1f1fae;letter-spacing:0.5px;">14/01/2023</div>
<div class="t" style="left:408px;top:443px;color:#222">H</div>
<div class="t" style="left:501px;top:443px;color:#1f1fae">MONTHLY</div>
<div class="t" style="left:596px;top:443px;color:#1f1fae">1</div>
<div class="t" style="left:709px;top:443px;width:120px;text-align:center;color:#1f1fae;">Holiday</div>
<div class="t" style="left:827px;top:443px;width:76px;text-align:right;color:#1f1fae">8:30</div>
<div class="t" style="left:907px;top:443px;width:124px;text-align:right;color:#1f1fae">17:30</div>
<div class="t" style="left:1035px;top:443px;width:70px;text-align:right;color:#222">0:00</div>
<div class="t" style="left:1109px;top:443px;width:77px;text-align:right;color:#222">0:00</div>
<svg class="ab" style="left:1213px;top:443px" width="13" height="13"><defs><linearGradient id="cg19" x1="0" y1="0" x2="1" y2="1"><stop offset="0" stop-color="#d4d4d4"/><stop offset="1" stop-color="#f8f8f8"/></linearGradient></defs><rect x="0.5" y="0.5" width="12" height="12" fill="#fff" stroke="#bcc4d0"/><rect x="2" y="2" width="9" height="9" fill="url(#cg19)"/></svg>
<div class="t" style="left:1249px;top:443px;width:69px;text-align:right;color:#222">0</div>
<div class="t" style="left:1322px;top:443px;width:61px;text-align:right;color:#222">0</div>
<div class="t" style="left:1387px;top:443px;width:62px;text-align:right;color:#222">0</div>
<div class="t" style="left:1453px;top:443px;width:62px;text-align:right;color:#222">0</div>
<div class="t" style="left:1519px;top:443px;width:54px;text-align:right;color:#222">0</div>
<div class="t" style="left:24px;top:466px;color:#1f1fae">SIM-00001</div>
<div class="t" style="left:128px;top:466px;color:#1f1fae">Mr.Toshiki Koga</div>
<div class="t" style="left:226px;top:466px;color:#1f1fae">Shacho</div>
<div class="t" style="left:306px;top:466px;width:94px;text-align:center;color:#1f1fae;letter-spacing:0.5px;">15/01/2023</div>
<div class="t" style="left:408px;top:466px;color:#222">H</div>
<div class="t" style="left:501px;top:466px;color:#1f1fae">MONTHLY</div>
<div class="t" style="left:596px;top:466px;color:#1f1fae">1</div>
<div class="t" style="left:709px;top:466px;width:120px;text-align:center;color:#1f1fae;">Holiday</div>
<div class="t" style="left:827px;top:466px;width:76px;text-align:right;color:#1f1fae">8:30</div>
<div class="t" style="left:907px;top:466px;width:124px;text-align:right;color:#1f1fae">17:30</div>
<div class="t" style="left:1035px;top:466px;width:70px;text-align:right;color:#222">0:00</div>
<div class="t" style="left:1109px;top:466px;width:77px;text-align:right;color:#222">0:00</div>
<svg class="ab" style="left:1213px;top:466px" width="13" height="13"><defs><linearGradient id="cg20" x1="0" y1="0" x2="1" y2="1"><stop offset="0" stop-color="#d4d4d4"/><stop offset="1" stop-color="#f8f8f8"/></linearGradient></defs><rect x="0.5" y="0.5" width="12" height="12" fill="#fff" stroke="#bcc4d0"/><rect x="2" y="2" width="9" height="9" fill="url(#cg20)"/></svg>
<div class="t" style="left:1249px;top:466px;width:69px;text-align:right;color:#222">0</div>
<div class="t" style="left:1322px;top:466px;width:61px;text-align:right;color:#222">0</div>
<div class="t" style="left:1387px;top:466px;width:62px;text-align:right;color:#222">0</div>
<div class="t" style="left:1453px;top:466px;width:62px;text-align:right;color:#222">0</div>
<div class="t" style="left:1519px;top:466px;width:54px;text-align:right;color:#222">0</div>
<div class="t" style="left:24px;top:489px;color:#1f1fae">SIM-00001</div>
<div class="t" style="left:128px;top:489px;color:#1f1fae">Mr.Toshiki Koga</div>
<div class="t" style="left:226px;top:489px;color:#1f1fae">Shacho</div>
<div class="t" style="left:306px;top:489px;width:94px;text-align:center;color:#1f1fae;letter-spacing:0.5px;">16/01/2023</div>
<div class="t" style="left:408px;top:489px;color:#222">M</div>
<div class="t" style="left:501px;top:489px;color:#1f1fae">MONTHLY</div>
<div class="t" style="left:596px;top:489px;color:#1f1fae">1</div>
<div class="t" style="left:709px;top:489px;width:120px;text-align:center;color:#1f1fae;">Working Day</div>
<div class="t" style="left:827px;top:489px;width:76px;text-align:right;color:#1f1fae">9:00</div>
<div class="t" style="left:907px;top:489px;width:124px;text-align:right;color:#1f1fae">17:30</div>
<div class="t" style="left:1035px;top:489px;width:70px;text-align:right;color:#222">8:41</div>
<div class="t" style="left:1109px;top:489px;width:77px;text-align:right;color:#222">17:43</div>
<svg class="ab" style="left:1213px;top:489px" width="13" height="13"><rect x="0.5" y="0.5" width="12" height="12" fill="#eef2f8" stroke="#c4ccd8"/><rect x="1.5" y="1.5" width="10" height="10" fill="#dfe5ee" stroke="#f4f6fa"/><path d="M3.2 6.4l2.4 3.2 4.2-7" fill="none" stroke="#4a6494" stroke-width="1.7"/></svg>
<div class="t" style="left:1249px;top:489px;width:69px;text-align:right;color:#222">0</div>
<div class="t" style="left:1322px;top:489px;width:61px;text-align:right;color:#222">0</div>
<div class="t" style="left:1387px;top:489px;width:62px;text-align:right;color:#222">0</div>
<div class="t" style="left:1453px;top:489px;width:62px;text-align:right;color:#222">0</div>
<div class="t" style="left:1519px;top:489px;width:54px;text-align:right;color:#222">0</div>
<div class="t" style="left:24px;top:512px;color:#1f1fae">SIM-00001</div>
<div class="t" style="left:128px;top:512px;color:#1f1fae">Mr.Toshiki Koga</div>
<div class="t" style="left:226px;top:512px;color:#1f1fae">Shacho</div>
<div class="t" style="left:306px;top:512px;width:94px;text-align:center;color:#1f1fae;letter-spacing:0.5px;">17/01/2023</div>
<div class="t" style="left:408px;top:512px;color:#222">M</div>
<div class="t" style="left:501px;top:512px;color:#1f1fae">MONTHLY</div>
<div class="t" style="left:596px;top:512px;color:#1f1fae">1</div>
<div class="t" style="left:709px;top:512px;width:120px;text-align:center;color:#1f1fae;">Working Day</div>
<div class="t" style="left:827px;top:512px;width:76px;text-align:right;color:#1f1fae">9:00</div>
<div class="t" style="left:907px;top:512px;width:124px;text-align:right;color:#1f1fae">17:30</div>
<div class="t" style="left:1035px;top:512px;width:70px;text-align:right;color:#222">8:53</div>
<div class="t" style="left:1109px;top:512px;width:77px;text-align:right;color:#222">17:40</div>
<svg class="ab" style="left:1213px;top:512px" width="13" height="13"><rect x="0.5" y="0.5" width="12" height="12" fill="#eef2f8" stroke="#c4ccd8"/><rect x="1.5" y="1.5" width="10" height="10" fill="#dfe5ee" stroke="#f4f6fa"/><path d="M3.2 6.4l2.4 3.2 4.2-7" fill="none" stroke="#4a6494" stroke-width="1.7"/></svg>
<div class="t" style="left:1249px;top:512px;width:69px;text-align:right;color:#222">0</div>
<div class="t" style="left:1322px;top:512px;width:61px;text-align:right;color:#222">0</div>
<div class="t" style="left:1387px;top:512px;width:62px;text-align:right;color:#222">0</div>
<div class="t" style="left:1453px;top:512px;width:62px;text-align:right;color:#222">0</div>
<div class="t" style="left:1519px;top:512px;width:54px;text-align:right;color:#222">0</div>
<div class="t" style="left:24px;top:535px;color:#1f1fae">SIM-00001</div>
<div class="t" style="left:128px;top:535px;color:#1f1fae">Mr.Toshiki Koga</div>
<div class="t" style="left:226px;top:535px;color:#1f1fae">Shacho</div>
<div class="t" style="left:306px;top:535px;width:94px;text-align:center;color:#1f1fae;letter-spacing:0.5px;">18/01/2023</div>
<div class="t" style="left:408px;top:535px;color:#222">M</div>
<div class="t" style="left:501px;top:535px;color:#1f1fae">MONTHLY</div>
<div class="t" style="left:596px;top:535px;color:#1f1fae">1</div>
<div class="t" style="left:709px;top:535px;width:120px;text-align:center;color:#1f1fae;">Working Day</div>
<div class="t" style="left:827px;top:535px;width:76px;text-align:right;color:#1f1fae">9:00</div>
<div class="t" style="left:907px;top:535px;width:124px;text-align:right;color:#1f1fae">17:30</div>
<div class="t" style="left:1035px;top:535px;width:70px;text-align:right;color:#222">8:15</div>
<div class="t" style="left:1109px;top:535px;width:77px;text-align:right;color:#222">17:46</div>
<svg class="ab" style="left:1213px;top:535px" width="13" height="13"><rect x="0.5" y="0.5" width="12" height="12" fill="#eef2f8" stroke="#c4ccd8"/><rect x="1.5" y="1.5" width="10" height="10" fill="#dfe5ee" stroke="#f4f6fa"/><path d="M3.2 6.4l2.4 3.2 4.2-7" fill="none" stroke="#4a6494" stroke-width="1.7"/></svg>
<div class="t" style="left:1249px;top:535px;width:69px;text-align:right;color:#222">0</div>
<div class="t" style="left:1322px;top:535px;width:61px;text-align:right;color:#222">30</div>
<div class="t" style="left:1387px;top:535px;width:62px;text-align:right;color:#222">0</div>
<div class="t" style="left:1453px;top:535px;width:62px;text-align:right;color:#222">0</div>
<div class="t" style="left:1519px;top:535px;width:54px;text-align:right;color:#222">0</div>
<div class="t" style="left:24px;top:558px;color:#1f1fae">SIM-00001</div>
<div class="t" style="left:128px;top:558px;color:#1f1fae">Mr.Toshiki Koga</div>
<div class="t" style="left:226px;top:558px;color:#1f1fae">Shacho</div>
<div class="t" style="left:306px;top:558px;width:94px;text-align:center;color:#1f1fae;letter-spacing:0.5px;">19/01/2023</div>
<div class="t" style="left:408px;top:558px;color:#222">M</div>
<div class="t" style="left:501px;top:558px;color:#1f1fae">MONTHLY</div>
<div class="t" style="left:596px;top:558px;color:#1f1fae">1</div>
<div class="t" style="left:709px;top:558px;width:120px;text-align:center;color:#1f1fae;">Working Day</div>
<div class="t" style="left:827px;top:558px;width:76px;text-align:right;color:#1f1fae">9:00</div>
<div class="t" style="left:907px;top:558px;width:124px;text-align:right;color:#1f1fae">17:30</div>
<div class="t" style="left:1035px;top:558px;width:70px;text-align:right;color:#222">8:12</div>
<div class="t" style="left:1109px;top:558px;width:77px;text-align:right;color:#222">17:44</div>
<svg class="ab" style="left:1213px;top:558px" width="13" height="13"><rect x="0.5" y="0.5" width="12" height="12" fill="#eef2f8" stroke="#c4ccd8"/><rect x="1.5" y="1.5" width="10" height="10" fill="#dfe5ee" stroke="#f4f6fa"/><path d="M3.2 6.4l2.4 3.2 4.2-7" fill="none" stroke="#4a6494" stroke-width="1.7"/></svg>
<div class="t" style="left:1249px;top:558px;width:69px;text-align:right;color:#222">0</div>
<div class="t" style="left:1322px;top:558px;width:61px;text-align:right;color:#222">30</div>
<div class="t" style="left:1387px;top:558px;width:62px;text-align:right;color:#222">0</div>
<div class="t" style="left:1453px;top:558px;width:62px;text-align:right;color:#222">0</div>
<div class="t" style="left:1519px;top:558px;width:54px;text-align:right;color:#222">0</div>
<div class="t" style="left:24px;top:581px;color:#1f1fae">SIM-00001</div>
<div class="t" style="left:128px;top:581px;color:#1f1fae">Mr.Toshiki Koga</div>
<div class="t" style="left:226px;top:581px;color:#1f1fae">Shacho</div>
<div class="t" style="left:306px;top:581px;width:94px;text-align:center;color:#1f1fae;letter-spacing:0.5px;">20/01/2023</div>
<div class="t" style="left:408px;top:581px;color:#222">M</div>
<div class="t" style="left:501px;top:581px;color:#1f1fae">MONTHLY</div>
<div class="t" style="left:596px;top:581px;color:#1f1fae">1</div>
<div class="t" style="left:709px;top:581px;width:120px;text-align:center;color:#1f1fae;">Working Day</div>
<div class="t" style="left:827px;top:581px;width:76px;text-align:right;color:#1f1fae">9:00</div>
<div class="t" style="left:907px;top:581px;width:124px;text-align:right;color:#1f1fae">17:30</div>
<div class="t" style="left:1035px;top:581px;width:70px;text-align:right;color:#222">8:14</div>
<div class="t" style="left:1109px;top:581px;width:77px;text-align:right;color:#222">17:33</div>
<svg class="ab" style="left:1213px;top:581px" width="13" height="13"><rect x="0.5" y="0.5" width="12" height="12" fill="#eef2f8" stroke="#c4ccd8"/><rect x="1.5" y="1.5" width="10" height="10" fill="#dfe5ee" stroke="#f4f6fa"/><path d="M3.2 6.4l2.4 3.2 4.2-7" fill="none" stroke="#4a6494" stroke-width="1.7"/></svg>
<div class="t" style="left:1249px;top:581px;width:69px;text-align:right;color:#222">0</div>
<div class="t" style="left:1322px;top:581px;width:61px;text-align:right;color:#222">30</div>
<div class="t" style="left:1387px;top:581px;width:62px;text-align:right;color:#222">0</div>
<div class="t" style="left:1453px;top:581px;width:62px;text-align:right;color:#222">0</div>
<div class="t" style="left:1519px;top:581px;width:54px;text-align:right;color:#222">0</div>
<div class="t" style="left:24px;top:604px;color:#1f1fae">SIM-00001</div>
<div class="t" style="left:128px;top:604px;color:#1f1fae">Mr.Toshiki Koga</div>
<div class="t" style="left:226px;top:604px;color:#1f1fae">Shacho</div>
<div class="t" style="left:306px;top:604px;width:94px;text-align:center;color:#1f1fae;letter-spacing:0.5px;">21/01/2023</div>
<div class="t" style="left:408px;top:604px;color:#222">H</div>
<div class="t" style="left:501px;top:604px;color:#1f1fae">MONTHLY</div>
<div class="t" style="left:596px;top:604px;color:#1f1fae">1</div>
<div class="t" style="left:709px;top:604px;width:120px;text-align:center;color:#1f1fae;">Holiday</div>
<div class="t" style="left:827px;top:604px;width:76px;text-align:right;color:#1f1fae">8:30</div>
<div class="t" style="left:907px;top:604px;width:124px;text-align:right;color:#1f1fae">17:30</div>
<div class="t" style="left:1035px;top:604px;width:70px;text-align:right;color:#222">0:00</div>
<div class="t" style="left:1109px;top:604px;width:77px;text-align:right;color:#222">0:00</div>
<svg class="ab" style="left:1213px;top:604px" width="13" height="13"><defs><linearGradient id="cg26" x1="0" y1="0" x2="1" y2="1"><stop offset="0" stop-color="#d4d4d4"/><stop offset="1" stop-color="#f8f8f8"/></linearGradient></defs><rect x="0.5" y="0.5" width="12" height="12" fill="#fff" stroke="#bcc4d0"/><rect x="2" y="2" width="9" height="9" fill="url(#cg26)"/></svg>
<div class="t" style="left:1249px;top:604px;width:69px;text-align:right;color:#222">0</div>
<div class="t" style="left:1322px;top:604px;width:61px;text-align:right;color:#222">0</div>
<div class="t" style="left:1387px;top:604px;width:62px;text-align:right;color:#222">0</div>
<div class="t" style="left:1453px;top:604px;width:62px;text-align:right;color:#222">0</div>
<div class="t" style="left:1519px;top:604px;width:54px;text-align:right;color:#222">0</div>
<div class="t" style="left:24px;top:627px;color:#1f1fae">SIM-00001</div>
<div class="t" style="left:128px;top:627px;color:#1f1fae">Mr.Toshiki Koga</div>
<div class="t" style="left:226px;top:627px;color:#1f1fae">Shacho</div>
<div class="t" style="left:306px;top:627px;width:94px;text-align:center;color:#1f1fae;letter-spacing:0.5px;">22/01/2023</div>
<div class="t" style="left:408px;top:627px;color:#222">H</div>
<div class="t" style="left:501px;top:627px;color:#1f1fae">MONTHLY</div>
<div class="t" style="left:596px;top:627px;color:#1f1fae">1</div>
<div class="t" style="left:709px;top:627px;width:120px;text-align:center;color:#1f1fae;">Holiday</div>
<div class="t" style="left:827px;top:627px;width:76px;text-align:right;color:#1f1fae">8:30</div>
<div class="t" style="left:907px;top:627px;width:124px;text-align:right;color:#1f1fae">17:30</div>
<div class="t" style="left:1035px;top:627px;width:70px;text-align:right;color:#222">0:00</div>
<div class="t" style="left:1109px;top:627px;width:77px;text-align:right;color:#222">0:00</div>
<svg class="ab" style="left:1213px;top:627px" width="13" height="13"><defs><linearGradient id="cg27" x1="0" y1="0" x2="1" y2="1"><stop offset="0" stop-color="#d4d4d4"/><stop offset="1" stop-color="#f8f8f8"/></linearGradient></defs><rect x="0.5" y="0.5" width="12" height="12" fill="#fff" stroke="#bcc4d0"/><rect x="2" y="2" width="9" height="9" fill="url(#cg27)"/></svg>
<div class="t" style="left:1249px;top:627px;width:69px;text-align:right;color:#222">0</div>
<div class="t" style="left:1322px;top:627px;width:61px;text-align:right;color:#222">0</div>
<div class="t" style="left:1387px;top:627px;width:62px;text-align:right;color:#222">0</div>
<div class="t" style="left:1453px;top:627px;width:62px;text-align:right;color:#222">0</div>
<div class="t" style="left:1519px;top:627px;width:54px;text-align:right;color:#222">0</div>
<div class="t" style="left:24px;top:650px;color:#1f1fae">SIM-00001</div>
<div class="t" style="left:128px;top:650px;color:#1f1fae">Mr.Toshiki Koga</div>
<div class="t" style="left:226px;top:650px;color:#1f1fae">Shacho</div>
<div class="t" style="left:306px;top:650px;width:94px;text-align:center;color:#1f1fae;letter-spacing:0.5px;">23/01/2023</div>
<div class="t" style="left:408px;top:650px;color:#222">M</div>
<div class="t" style="left:501px;top:650px;color:#1f1fae">MONTHLY</div>
<div class="t" style="left:596px;top:650px;color:#1f1fae">1</div>
<div class="t" style="left:709px;top:650px;width:120px;text-align:center;color:#1f1fae;">Working Day</div>
<div class="t" style="left:827px;top:650px;width:76px;text-align:right;color:#1f1fae">9:00</div>
<div class="t" style="left:907px;top:650px;width:124px;text-align:right;color:#1f1fae">17:30</div>
<div class="t" style="left:1035px;top:650px;width:70px;text-align:right;color:#222">8:19</div>
<div class="t" style="left:1109px;top:650px;width:77px;text-align:right;color:#222">17:30</div>
<svg class="ab" style="left:1213px;top:650px" width="13" height="13"><rect x="0.5" y="0.5" width="12" height="12" fill="#eef2f8" stroke="#c4ccd8"/><rect x="1.5" y="1.5" width="10" height="10" fill="#dfe5ee" stroke="#f4f6fa"/><path d="M3.2 6.4l2.4 3.2 4.2-7" fill="none" stroke="#4a6494" stroke-width="1.7"/></svg>
<div class="t" style="left:1249px;top:650px;width:69px;text-align:right;color:#222">0</div>
<div class="t" style="left:1322px;top:650px;width:61px;text-align:right;color:#222">30</div>
<div class="t" style="left:1387px;top:650px;width:62px;text-align:right;color:#222">0</div>
<div class="t" style="left:1453px;top:650px;width:62px;text-align:right;color:#222">0</div>
<div class="t" style="left:1519px;top:650px;width:54px;text-align:right;color:#222">0</div>
<div class="t" style="left:24px;top:673px;color:#1f1fae">SIM-00001</div>
<div class="t" style="left:128px;top:673px;color:#1f1fae">Mr.Toshiki Koga</div>
<div class="t" style="left:226px;top:673px;color:#1f1fae">Shacho</div>
<div class="t" style="left:306px;top:673px;width:94px;text-align:center;color:#1f1fae;letter-spacing:0.5px;">24/01/2023</div>
<div class="t" style="left:408px;top:673px;color:#222">M</div>
<div class="t" style="left:501px;top:673px;color:#1f1fae">MONTHLY</div>
<div class="t" style="left:596px;top:673px;color:#1f1fae">1</div>
<div class="t" style="left:709px;top:673px;width:120px;text-align:center;color:#1f1fae;">Working Day</div>
<div class="t" style="left:827px;top:673px;width:76px;text-align:right;color:#1f1fae">9:00</div>
<div class="t" style="left:907px;top:673px;width:124px;text-align:right;color:#1f1fae">17:30</div>
<div class="t" style="left:1035px;top:673px;width:70px;text-align:right;color:#222">8:57</div>
<div class="t" style="left:1109px;top:673px;width:77px;text-align:right;color:#222">17:33</div>
<svg class="ab" style="left:1213px;top:673px" width="13" height="13"><rect x="0.5" y="0.5" width="12" height="12" fill="#eef2f8" stroke="#c4ccd8"/><rect x="1.5" y="1.5" width="10" height="10" fill="#dfe5ee" stroke="#f4f6fa"/><path d="M3.2 6.4l2.4 3.2 4.2-7" fill="none" stroke="#4a6494" stroke-width="1.7"/></svg>
<div class="t" style="left:1249px;top:673px;width:69px;text-align:right;color:#222">0</div>
<div class="t" style="left:1322px;top:673px;width:61px;text-align:right;color:#222">0</div>
<div class="t" style="left:1387px;top:673px;width:62px;text-align:right;color:#222">0</div>
<div class="t" style="left:1453px;top:673px;width:62px;text-align:right;color:#222">0</div>
<div class="t" style="left:1519px;top:673px;width:54px;text-align:right;color:#222">0</div>
<div class="t" style="left:24px;top:696px;color:#1f1fae">SIM-00001</div>
<div class="t" style="left:128px;top:696px;color:#1f1fae">Mr.Toshiki Koga</div>
<div class="t" style="left:226px;top:696px;color:#1f1fae">Shacho</div>
<div class="t" style="left:306px;top:696px;width:94px;text-align:center;color:#1f1fae;letter-spacing:0.5px;">25/01/2023</div>
<div class="t" style="left:408px;top:696px;color:#222">M</div>
<div class="t" style="left:501px;top:696px;color:#1f1fae">MONTHLY</div>
<div class="t" style="left:596px;top:696px;color:#1f1fae">1</div>
<div class="t" style="left:709px;top:696px;width:120px;text-align:center;color:#1f1fae;">Working Day</div>
<div class="t" style="left:827px;top:696px;width:76px;text-align:right;color:#1f1fae">9:00</div>
<div class="t" style="left:907px;top:696px;width:124px;text-align:right;color:#1f1fae">17:30</div>
<div class="t" style="left:1035px;top:696px;width:70px;text-align:right;color:#222">8:25</div>
<div class="t" style="left:1109px;top:696px;width:77px;text-align:right;color:#222">17:32</div>
<svg class="ab" style="left:1213px;top:696px" width="13" height="13"><rect x="0.5" y="0.5" width="12" height="12" fill="#eef2f8" stroke="#c4ccd8"/><rect x="1.5" y="1.5" width="10" height="10" fill="#dfe5ee" stroke="#f4f6fa"/><path d="M3.2 6.4l2.4 3.2 4.2-7" fill="none" stroke="#4a6494" stroke-width="1.7"/></svg>
<div class="t" style="left:1249px;top:696px;width:69px;text-align:right;color:#222">0</div>
<div class="t" style="left:1322px;top:696px;width:61px;text-align:right;color:#222">30</div>
<div class="t" style="left:1387px;top:696px;width:62px;text-align:right;color:#222">0</div>
<div class="t" style="left:1453px;top:696px;width:62px;text-align:right;color:#222">0</div>
<div class="t" style="left:1519px;top:696px;width:54px;text-align:right;color:#222">0</div>
<div class="t" style="left:24px;top:719px;color:#1f1fae">SIM-00002</div>
<div class="t" style="left:128px;top:719px;color:#1f1fae">Ms.Jaiwun Thon</div>
<div class="t" style="left:226px;top:719px;color:#1f1fae">Kiki</div>
<div class="t" style="left:306px;top:719px;width:94px;text-align:center;color:#1f1fae;letter-spacing:0.5px;">26/12/2022</div>
<div class="t" style="left:408px;top:719px;color:#222">M</div>
<div class="t" style="left:501px;top:719px;color:#1f1fae">MONTHLY</div>
<div class="t" style="left:596px;top:719px;color:#1f1fae">1</div>
<div class="t" style="left:709px;top:719px;width:120px;text-align:center;color:#1f1fae;">Working Day</div>
<div class="t" style="left:827px;top:719px;width:76px;text-align:right;color:#1f1fae">9:00</div>
<div class="t" style="left:907px;top:719px;width:124px;text-align:right;color:#1f1fae">17:30</div>
<div class="t" style="left:1035px;top:719px;width:70px;text-align:right;color:#222">8:46</div>
<div class="t" style="left:1109px;top:719px;width:77px;text-align:right;color:#222">21:33</div>
<svg class="ab" style="left:1213px;top:719px" width="13" height="13"><rect x="0.5" y="0.5" width="12" height="12" fill="#eef2f8" stroke="#c4ccd8"/><rect x="1.5" y="1.5" width="10" height="10" fill="#dfe5ee" stroke="#f4f6fa"/><path d="M3.2 6.4l2.4 3.2 4.2-7" fill="none" stroke="#4a6494" stroke-width="1.7"/></svg>
<div class="t" style="left:1249px;top:719px;width:69px;text-align:right;color:#222">0</div>
<div class="t" style="left:1322px;top:719px;width:61px;text-align:right;color:#222">240</div>
<div class="t" style="left:1387px;top:719px;width:62px;text-align:right;color:#222">0</div>
<div class="t" style="left:1453px;top:719px;width:62px;text-align:right;color:#222">0</div>
<div class="t" style="left:1519px;top:719px;width:54px;text-align:right;color:#222">0</div>
<div class="ab" style="left:18px;top:1px;width:1559px;height:23px;border:1px dotted #000"></div>
</div>
<div class="ab" style="left:1894px;top:208px;width:17px;height:756px;background:#f0f0f0"></div>
<div class="ab" style="left:1895px;top:209px;width:16px;height:4px;background:#9fcfd0"></div>
<svg class="ab" style="left:1898px;top:220px" width="9" height="6"><path d="M0 5.5h9L4.5 0z" fill="#3e4862"/></svg>
<div class="ab" style="left:1895px;top:231px;width:15px;height:28px;border:1px solid #a8a8a8;border-radius:2px;background:linear-gradient(90deg,#f2f2f2,#dcdcdc 50%,#cfcfcf)"></div>
<svg class="ab" style="left:1899px;top:241px" width="7" height="8"><path d="M0 0.5h7M0 2.5h7M0 4.5h7M0 6.5h7" stroke="#777"/></svg>
<svg class="ab" style="left:1898px;top:951px" width="9" height="6"><path d="M0 0.5h9L4.5 5z" fill="#3e4862"/></svg>
<div class="ab" style="left:317px;top:963px;width:1594px;height:16px;background:#f0f0f0"></div>
<div class="ab" style="left:317px;top:964px;width:5px;height:15px;background:#9fcfd0"></div>
<svg class="ab" style="left:328px;top:967px" width="6" height="9"><path d="M5 0v9L0 4.5z" fill="#3e4862"/></svg>
<div class="ab" style="left:339px;top:965px;width:339px;height:13px;border:1px solid #a8a8a8;border-radius:2px;background:linear-gradient(#f2f2f2,#dcdcdc 50%,#cfcfcf)"></div>
<svg class="ab" style="left:505px;top:968px" width="8" height="7"><path d="M0.5 0v7M2.5 0v7M4.5 0v7M6.5 0v7" stroke="#777"/></svg>
<svg class="ab" style="left:1883px;top:967px" width="6" height="9"><path d="M0 0v9L5 4.5z" fill="#3e4862"/></svg>
<div class="ab" style="left:306px;top:979px;width:1612px;height:30px;background:#e6e6fa"></div>
<div class="ab" style="left:316px;top:980px;width:1596px;height:1px;background:#d2e6ee"></div>
<div class="ab" style="left:363px;top:982px;width:112px;height:20px;background:#e0ffff"></div>
<div class="ab" style="left:655px;top:982px;width:1257px;height:19px;background:#e0ffff;border-top:1px solid #a8b0b0;border-left:1px solid #a0a8a8"></div>
<div class="ab" style="left:315px;top:981px;width:24px;height:23px;border:1px solid #8f8f8f;border-radius:3px;background:linear-gradient(#f7f7f7 0%,#ececec 50%,#dedede 51%,#d5d5d5 100%)"><div class="t" style="left:0;top:4px;width:22px;text-align:center;color:#222;font-size:11.5px">|&lt;</div></div>
<div class="ab" style="left:340px;top:981px;width:23px;height:23px;border:1px solid #8f8f8f;border-radius:3px;background:linear-gradient(#f7f7f7 0%,#ececec 50%,#dedede 51%,#d5d5d5 100%)"><div class="t" style="left:0;top:4px;width:21px;text-align:center;color:#222;font-size:11.5px">&lt;</div></div>
<div class="t" style="left:363px;top:985px;width:110px;text-align:right;color:#222;letter-spacing:-0.3px">1 / 496</div>
<div class="ab" style="left:475px;top:981px;width:24px;height:23px;border:1px solid #8f8f8f;border-radius:3px;background:linear-gradient(#f7f7f7 0%,#ececec 50%,#dedede 51%,#d5d5d5 100%)"><div class="t" style="left:0;top:4px;width:22px;text-align:center;color:#222;font-size:11.5px">&gt;</div></div>
<div class="ab" style="left:500px;top:981px;width:23px;height:23px;border:1px solid #8f8f8f;border-radius:3px;background:linear-gradient(#f7f7f7 0%,#ececec 50%,#dedede 51%,#d5d5d5 100%)"><div class="t" style="left:0;top:4px;width:21px;text-align:center;color:#222;font-size:11.5px">&gt;|</div></div>
<div class="ab" style="left:524px;top:981px;width:35px;height:23px;border:1px solid #8f8f8f;border-radius:3px;background:linear-gradient(#f7f7f7 0%,#ececec 50%,#dedede 51%,#d5d5d5 100%)"><svg class="ab" style="left:8px;top:3px" width="18" height="15"><path d="M4.5 1h9.5l-2 5h-9.5z" fill="#f2f2f2" stroke="#555" stroke-width="1.1"/><path d="M5 2.8h6.5M4.3 4.4h6.5" stroke="#555" stroke-width="0.9"/><path d="M2.5 6h11.5l2 2v4.5l-1.5 1.5h-11l-1.5-1.5V8z" fill="#e4e4e4" stroke="#555" stroke-width="1.1"/><path d="M1.5 9h14M1.5 11h14" stroke="#555" stroke-width="1"/><path d="M13 6.5l2.5 2.5M13 9l2.5 2.5" stroke="#777" stroke-width="0.8"/></svg></div>
<div class="ab" style="left:560px;top:983px;width:95px;height:19px;border:1px solid #a4a4a4;border-radius:2px;background:#f0f0f0"></div>
<div class="t" style="left:560px;top:985px;width:95px;text-align:center;color:#222">0%</div>
<div class="ab" style="left:306px;top:1007px;width:1612px;height:1px;background:#fafafa"></div>
<div class="ab" style="left:586px;top:1008px;width:1332px;height:1px;background:#a9adb3"></div>
<div class="ab" style="left:306px;top:1009px;width:1612px;height:20px;background:#e0ffff"></div>
<div class="ab" style="left:306px;top:1007px;width:280px;height:22px;background:#f4f4f4"></div>
<div class="ab" style="left:309px;top:1010px;width:166px;height:21px;border:1px solid #b0b0b0;border-radius:3px;background:#f0f0f0"></div>
<div class="t" style="left:309px;top:1012px;width:166px;text-align:center;color:#222">0%</div>
<div class="ab" style="left:478px;top:1009px;width:35px;height:22px;border:1px solid #8f8f8f;border-radius:3px;background:linear-gradient(#f7f7f7 0%,#ececec 50%,#dedede 51%,#d5d5d5 100%)"><svg class="ab" style="left:10px;top:2px" width="14" height="15"><path d="M1.5 1.5h8l3 3v9h-11z" fill="#fff" stroke="#111"/><path d="M4 7a3 3 0 0 1 5.5-1M10 9a3 3 0 0 1-5.5 1" fill="none" stroke="#1aa34a" stroke-width="1.8"/></svg></div>
<div class="ab" style="left:514px;top:1009px;width:35px;height:22px;border:1px solid #8f8f8f;border-radius:3px;background:linear-gradient(#f7f7f7 0%,#ececec 50%,#dedede 51%,#d5d5d5 100%)"><svg class="ab" style="left:8px;top:3px" width="18" height="14"><path d="M2 1.5h3l1 1.5h2.5l1 2h2.5l1 2h2v4.5H4.5L2 8z" fill="#a8a8a8"/><path d="M3 2.5l2.5 5M6.5 3.5l2.5 4M10 5.5l2 3" stroke="#c8c8c8" stroke-width="1.2"/><rect x="4" y="10" width="11" height="2" fill="#8a8a8a"/></svg></div>
<div class="ab" style="left:550px;top:1009px;width:35px;height:22px;border:1px solid #8f8f8f;border-radius:3px;background:linear-gradient(#f7f7f7 0%,#ececec 50%,#dedede 51%,#d5d5d5 100%)"><div class="t" style="left:0;top:3px;width:33px;text-align:center;color:#1414a4;font-weight:bold;font-size:12px">SQL</div></div>
</body></html>
